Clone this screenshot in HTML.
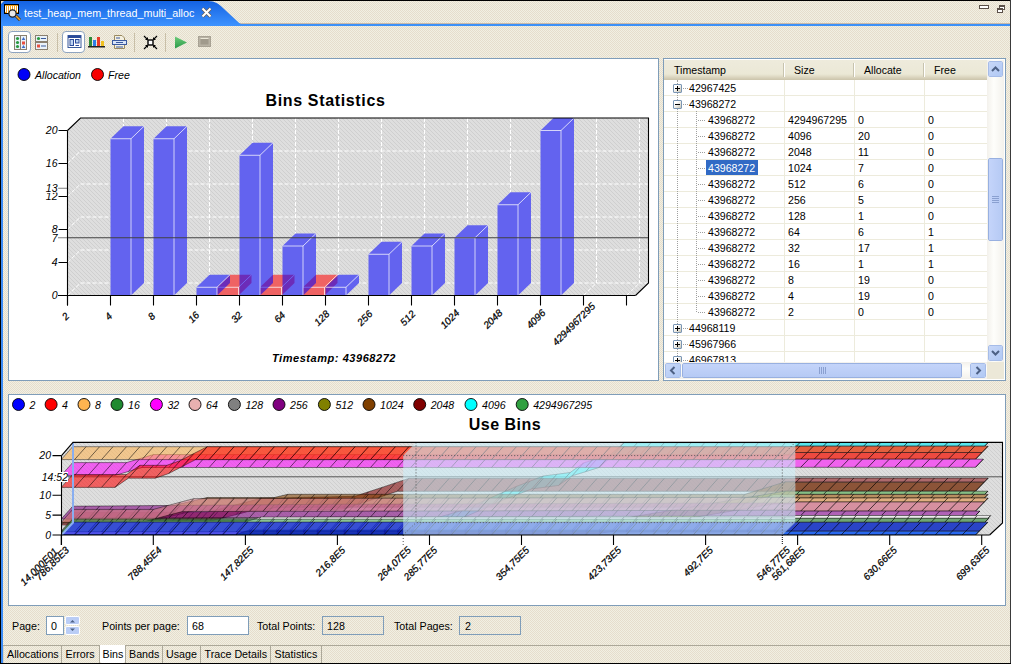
<!DOCTYPE html>
<html><head><meta charset="utf-8">
<style>
*{box-sizing:border-box}
html,body{margin:0;padding:0}
body{width:1011px;height:664px;overflow:hidden;position:relative;background:#ECE7D7 repeating-conic-gradient(#F1F0E3 0 25%,#E6DDCC 0 50%) 0 0/2px 2px;font-family:"Liberation Sans",sans-serif;font-size:10.7px;color:#000}
.a{position:absolute}
.t{position:absolute;white-space:nowrap;line-height:1}
.panel{position:absolute;background:#fff;border:1px solid #7F9DB9}
</style></head><body>
<!-- frame -->
<div class="a" style="left:0;top:0;width:1011px;height:1px;background:#000"></div>
<div class="a" style="left:0;top:0;width:1px;height:664px;background:#000"></div>
<div class="a" style="left:1010px;top:0;width:1px;height:664px;background:#3a3a3a"></div>
<div class="a" style="left:0;top:663px;width:1011px;height:1px;background:#000"></div>
<div class="a" style="left:1px;top:1px;width:2px;height:662px;background:#3C8CF5"></div>
<!-- tab bar -->
<div class="a" style="left:1px;top:23px;width:1009px;height:1px;background:#C8B8A8"></div>
<div class="a" style="left:1px;top:24px;width:1009px;height:2px;background:#3D91F8"></div>
<svg class="a" style="left:1px;top:1px" width="250" height="25">
<defs><linearGradient id="tg" x1="0" y1="0" x2="0" y2="1"><stop offset="0" stop-color="#1462E2"/><stop offset="1" stop-color="#3D93FF"/></linearGradient></defs>
<path d="M0 0 H207 C214 0 218 3 222 7 L236 20 C239 23 241 24 246 24 H250 V25 H0 Z" fill="url(#tg)"/>
<path d="M0 0 H3 L0 3 Z" fill="#E8E0D0"/>
</svg>
<div class="t" style="left:24px;top:8px;color:#fff;font-size:10.75px">test_heap_mem_thread_multi_alloc</div>
<!-- tab icon -->
<svg class="a" style="left:4px;top:4px" width="17" height="17" shape-rendering="crispEdges">
<rect x="0" y="0" width="15" height="10" fill="#000"/>
<rect x="1" y="1" width="13" height="8" fill="#F0A020"/>
<rect x="1" y="2" width="1" height="6" fill="#fff"/><rect x="3" y="2" width="1" height="7" fill="#fff"/>
<rect x="5" y="2" width="1" height="6" fill="#fff"/><rect x="7" y="2" width="1" height="7" fill="#fff"/>
<rect x="9" y="2" width="1" height="6" fill="#fff"/><rect x="11" y="2" width="1" height="7" fill="#fff"/>
<rect x="13" y="2" width="1" height="6" fill="#fff"/>
</svg>
<svg class="a" style="left:4px;top:4px" width="17" height="17">
<path d="M12 12L16 16" stroke="#4a3000" stroke-width="3"/>
<path d="M12 12L16 16" stroke="#F0A030" stroke-width="1.6"/>
<circle cx="8.5" cy="9.5" r="3.6" fill="#E8E8E8" stroke="#222" stroke-width="1.3"/>
</svg>
<!-- close X -->
<svg class="a" style="left:201px;top:7px" width="11" height="11">
<path d="M1.5 1.5L9.5 9.5M9.5 1.5L1.5 9.5" stroke="#6a5a4a" stroke-width="3.2"/>
<path d="M1.5 1.5L9.5 9.5M9.5 1.5L1.5 9.5" stroke="#fff" stroke-width="2"/>
</svg>
<!-- min / restore -->
<div class="a" style="left:979px;top:5px;width:10px;height:4px;border:1px solid #5a5048;background:#fff"></div>
<div class="a" style="left:999px;top:5px;width:6px;height:5px;border:1px solid #5a5048;border-top-width:2px;background:#fff"></div>
<div class="a" style="left:997px;top:8px;width:6px;height:5px;border:1px solid #5a5048;border-top-width:2px;background:#fff"></div>

<!-- toolbar -->
<div class="a" style="left:8px;top:31px;width:23px;height:22px;background:#fff;border:1px solid #8EA4C0;border-radius:4px"></div>
<div class="a" style="left:62px;top:31px;width:23px;height:22px;background:#fff;border:1px solid #8EA4C0;border-radius:4px"></div>
<div class="a" style="left:57px;top:33px;width:1px;height:19px;background:#C8BFA8"></div>
<div class="a" style="left:134px;top:33px;width:1px;height:19px;background:#C8BFA8"></div>
<div class="a" style="left:165px;top:33px;width:1px;height:19px;background:#C8BFA8"></div>
<svg class="a" style="left:13px;top:34px" width="15" height="17">
<rect x="1.5" y="1.5" width="12" height="14" fill="#EAF2FA" stroke="#8A8070"/>
<path d="M7.5 1.5V15.5" stroke="#8A8070"/>
<circle cx="4.5" cy="4.5" r="1.6" fill="#2A9A40"/><circle cx="4.5" cy="8.5" r="1.6" fill="#2A9A40"/><circle cx="4.5" cy="12.5" r="1.6" fill="#2A9A40"/>
<path d="M10.5 3L12.3 6H8.7Z" fill="#3A6AC8"/><rect x="9" y="7.5" width="3" height="3" fill="#E85040"/><path d="M10.5 11L12.3 14H8.7Z" fill="#3A6AC8"/>
</svg>
<svg class="a" style="left:34px;top:34px" width="15" height="17">
<rect x="1.5" y="1.5" width="12" height="6" fill="#EAF2FA" stroke="#8A8070"/>
<rect x="1.5" y="8.5" width="12" height="7" fill="#EAF2FA" stroke="#8A8070"/>
<circle cx="4.5" cy="4.5" r="1.6" fill="#2A9A40"/><rect x="3" y="10.5" width="3" height="3" fill="#E85040"/>
<path d="M7 4.5H12M7 12H12" stroke="#3A5A9A" stroke-width="1"/>
</svg>
<svg class="a" style="left:67px;top:35px" width="15" height="14">
<rect x="1" y="0.5" width="13" height="12" fill="#fff" stroke="#3A5A9A"/>
<rect x="1" y="0.5" width="13" height="2.5" fill="#2A4A9A"/>
<rect x="3" y="4.5" width="3.5" height="6" fill="#BFD4F0" stroke="#2A4A9A"/>
<rect x="8.5" y="4.5" width="3.5" height="3.5" fill="#BFD4F0" stroke="#2A4A9A"/>
<path d="M8.5 10.5H12" stroke="#2A4A9A"/>
</svg>
<svg class="a" style="left:88px;top:36px" width="17" height="12">
<rect x="1" y="1" width="3" height="9" fill="#2E8A3A"/>
<rect x="5" y="4" width="3" height="6" fill="#2E7EE8"/>
<rect x="9" y="1" width="3" height="9" fill="#E83A2A"/>
<rect x="13" y="5" width="3" height="5" fill="#F0C020"/>
<rect x="0" y="10" width="17" height="1.5" fill="#222"/>
</svg>
<svg class="a" style="left:112px;top:35px" width="15" height="15">
<path d="M2.5 0.5H10L12.5 3V13.5H2.5Z" fill="#F4F0E0" stroke="#9A8A60"/>
<rect x="0.5" y="5.5" width="14" height="4" fill="#D8E4F8" stroke="#3A5AA0"/>
<path d="M4 3H8M4 7.5H11M4 12H11" stroke="#3A5AA0"/>
</svg>
<svg class="a" style="left:143px;top:35px" width="15" height="15">
<rect x="5" y="5" width="5" height="5" fill="#fff" stroke="#000" stroke-width="1.4"/>
<path d="M1 1L4.5 4.5M14 1L10.5 4.5M1 14L4.5 10.5M14 14L10.5 10.5" stroke="#000" stroke-width="1.2"/>
<path d="M2.5 4.5H4.5V2.5M12.5 4.5H10.5V2.5M2.5 10.5H4.5V12.5M12.5 10.5H10.5V12.5" stroke="#000" fill="none" stroke-width="1"/>
</svg>
<svg class="a" style="left:174px;top:36px" width="14" height="13">
<defs><linearGradient id="pg" x1="0" y1="0" x2="0" y2="1"><stop offset="0" stop-color="#6CCB7A"/><stop offset="1" stop-color="#2A9A48"/></linearGradient></defs>
<path d="M1 0.5L13 6.5L1 12.5Z" fill="url(#pg)"/>
</svg>
<svg class="a" style="left:198px;top:36px" width="13" height="11">
<rect x="0.5" y="0.5" width="12" height="10" fill="#B8B2A4" stroke="#A8A294"/>
<rect x="2.5" y="2.5" width="8" height="6" fill="#A09A8C"/>
<path d="M2.5 2.5H10.5" stroke="#ECE8D8"/>
</svg>


<!-- panels -->
<div class="panel" style="left:8px;top:58px;width:651px;height:323px"></div>
<div class="panel" style="left:663px;top:58px;width:343px;height:323px"></div>
<div class="panel" style="left:8px;top:394px;width:998px;height:212px"></div>

<svg class="a" style="left:0;top:0" width="1011" height="664" viewBox="0 0 1011 664">
<defs><pattern id="hatch" width="4" height="4" patternUnits="userSpaceOnUse"><rect width="4" height="4" fill="#DEDEDE"/><path d="M0 0L4 4M3 -1L5 1M-1 3L1 5" stroke="#CFCFCF" stroke-width="1"/></pattern></defs>
<circle cx="24" cy="74.5" r="6" fill="#0000F8" stroke="#000" stroke-width="0.9"/>
<circle cx="97.5" cy="74.5" r="6" fill="#F80000" stroke="#000" stroke-width="0.9"/>
<text x="35" y="78.8" font-size="10.6" font-style="italic">Allocation</text>
<text x="108" y="78.8" font-size="10.6" font-style="italic">Free</text>
<text x="325.5" y="105.5" font-size="16" font-weight="bold" text-anchor="middle" letter-spacing="0.65">Bins Statistics</text>
<path d="M67.5 130.5 L80.5 118.0 H648.5 V283.0 L635.5 295.5 H67.5 Z" fill="url(#hatch)"/>
<path d="M80.5 151.0H648.5M67.5 163.5L80.5 151.0M80.5 184.0H648.5M67.5 196.5L80.5 184.0M80.5 217.0H648.5M67.5 229.5L80.5 217.0M80.5 250.0H648.5M67.5 262.5L80.5 250.0M80.5 283.0H648.5M123.5 118.0V283.0M110.5 295.5L123.5 283.0M166.5 118.0V283.0M153.5 295.5L166.5 283.0M209.5 118.0V283.0M196.5 295.5L209.5 283.0M252.5 118.0V283.0M239.5 295.5L252.5 283.0M295.5 118.0V283.0M282.5 295.5L295.5 283.0M338.5 118.0V283.0M325.5 295.5L338.5 283.0M381.5 118.0V283.0M368.5 295.5L381.5 283.0M424.5 118.0V283.0M411.5 295.5L424.5 283.0M467.5 118.0V283.0M454.5 295.5L467.5 283.0M510.5 118.0V283.0M497.5 295.5L510.5 283.0M553.5 118.0V283.0M540.5 295.5L553.5 283.0M596.5 118.0V283.0M583.5 295.5L596.5 283.0M639.5 118.0V283.0M626.5 295.5L639.5 283.0M67.5 295.5L80.5 283.0" stroke="#fff" stroke-width="1" stroke-dasharray="4 2" fill="none"/>

<path d="M110.5 295.5V138.75L123.5 126.25H144.0V283.0L131.0 295.5Z" fill="#DCDCDC"/>
<path d="M153.5 295.5V138.75L166.5 126.25H187.0V283.0L174.0 295.5Z" fill="#DCDCDC"/>
<path d="M217.0 295.5V287.25L230.0 274.75H251.5V283.0L238.5 295.5Z" fill="#DCDCDC"/>
<path d="M196.5 295.5V287.25L209.5 274.75H230.0V283.0L217.0 295.5Z" fill="#DCDCDC"/>
<path d="M260.0 295.5V287.25L273.0 274.75H294.5V283.0L281.5 295.5Z" fill="#DCDCDC"/>
<path d="M239.5 295.5V155.25L252.5 142.75H273.0V283.0L260.0 295.5Z" fill="#DCDCDC"/>
<path d="M303.0 295.5V287.25L316.0 274.75H337.5V283.0L324.5 295.5Z" fill="#DCDCDC"/>
<path d="M282.5 295.5V246.0L295.5 233.5H316.0V283.0L303.0 295.5Z" fill="#DCDCDC"/>
<path d="M325.5 295.5V287.25L338.5 274.75H359.0V283.0L346.0 295.5Z" fill="#DCDCDC"/>
<path d="M368.5 295.5V254.25L381.5 241.75H402.0V283.0L389.0 295.5Z" fill="#DCDCDC"/>
<path d="M411.5 295.5V246.0L424.5 233.5H445.0V283.0L432.0 295.5Z" fill="#DCDCDC"/>
<path d="M454.5 295.5V237.75L467.5 225.25H488.0V283.0L475.0 295.5Z" fill="#DCDCDC"/>
<path d="M497.5 295.5V204.75L510.5 192.25H531.0V283.0L518.0 295.5Z" fill="#DCDCDC"/>
<path d="M540.5 295.5V130.5L553.5 118.0H574.0V283.0L561.0 295.5Z" fill="#DCDCDC"/>

<path d="M238.5 287.25L251.5 274.75V283.0L238.5 295.5Z" fill="rgba(255,0,0,0.55)"/><path d="M217.0 287.25L230.0 274.75H251.5L238.5 287.25Z" fill="rgba(255,0,0,0.55)"/><path d="M217.0 295.5V287.25H238.5V295.5Z" fill="rgba(255,0,0,0.55)"/><path d="M217.0 287.25H238.5V295.5M238.5 287.25L251.5 274.75" stroke="#fff" stroke-opacity="0.7" stroke-width="1" fill="none"/>
<path d="M281.5 287.25L294.5 274.75V283.0L281.5 295.5Z" fill="rgba(255,0,0,0.55)"/><path d="M260.0 287.25L273.0 274.75H294.5L281.5 287.25Z" fill="rgba(255,0,0,0.55)"/><path d="M260.0 295.5V287.25H281.5V295.5Z" fill="rgba(255,0,0,0.55)"/><path d="M260.0 287.25H281.5V295.5M281.5 287.25L294.5 274.75" stroke="#fff" stroke-opacity="0.7" stroke-width="1" fill="none"/>
<path d="M324.5 287.25L337.5 274.75V283.0L324.5 295.5Z" fill="rgba(255,0,0,0.55)"/><path d="M303.0 287.25L316.0 274.75H337.5L324.5 287.25Z" fill="rgba(255,0,0,0.55)"/><path d="M303.0 295.5V287.25H324.5V295.5Z" fill="rgba(255,0,0,0.55)"/><path d="M303.0 287.25H324.5V295.5M324.5 287.25L337.5 274.75" stroke="#fff" stroke-opacity="0.7" stroke-width="1" fill="none"/>

<path d="M131.0 138.75L144.0 126.25V283.0L131.0 295.5Z" fill="rgba(0,0,255,0.55)"/><path d="M110.5 138.75L123.5 126.25H144.0L131.0 138.75Z" fill="rgba(0,0,255,0.55)"/><path d="M110.5 295.5V138.75H131.0V295.5Z" fill="rgba(0,0,255,0.55)"/><path d="M110.5 138.75H131.0V295.5M131.0 138.75L144.0 126.25" stroke="#fff" stroke-opacity="0.7" stroke-width="1" fill="none"/>
<path d="M174.0 138.75L187.0 126.25V283.0L174.0 295.5Z" fill="rgba(0,0,255,0.55)"/><path d="M153.5 138.75L166.5 126.25H187.0L174.0 138.75Z" fill="rgba(0,0,255,0.55)"/><path d="M153.5 295.5V138.75H174.0V295.5Z" fill="rgba(0,0,255,0.55)"/><path d="M153.5 138.75H174.0V295.5M174.0 138.75L187.0 126.25" stroke="#fff" stroke-opacity="0.7" stroke-width="1" fill="none"/>
<path d="M217.0 287.25L230.0 274.75V283.0L217.0 295.5Z" fill="rgba(0,0,255,0.55)"/><path d="M196.5 287.25L209.5 274.75H230.0L217.0 287.25Z" fill="rgba(0,0,255,0.55)"/><path d="M196.5 295.5V287.25H217.0V295.5Z" fill="rgba(0,0,255,0.55)"/><path d="M196.5 287.25H217.0V295.5M217.0 287.25L230.0 274.75" stroke="#fff" stroke-opacity="0.7" stroke-width="1" fill="none"/>
<path d="M260.0 155.25L273.0 142.75V283.0L260.0 295.5Z" fill="rgba(0,0,255,0.55)"/><path d="M239.5 155.25L252.5 142.75H273.0L260.0 155.25Z" fill="rgba(0,0,255,0.55)"/><path d="M239.5 295.5V155.25H260.0V295.5Z" fill="rgba(0,0,255,0.55)"/><path d="M239.5 155.25H260.0V295.5M260.0 155.25L273.0 142.75" stroke="#fff" stroke-opacity="0.7" stroke-width="1" fill="none"/>
<path d="M303.0 246.0L316.0 233.5V283.0L303.0 295.5Z" fill="rgba(0,0,255,0.55)"/><path d="M282.5 246.0L295.5 233.5H316.0L303.0 246.0Z" fill="rgba(0,0,255,0.55)"/><path d="M282.5 295.5V246.0H303.0V295.5Z" fill="rgba(0,0,255,0.55)"/><path d="M282.5 246.0H303.0V295.5M303.0 246.0L316.0 233.5" stroke="#fff" stroke-opacity="0.7" stroke-width="1" fill="none"/>
<path d="M346.0 287.25L359.0 274.75V283.0L346.0 295.5Z" fill="rgba(0,0,255,0.55)"/><path d="M325.5 287.25L338.5 274.75H359.0L346.0 287.25Z" fill="rgba(0,0,255,0.55)"/><path d="M325.5 295.5V287.25H346.0V295.5Z" fill="rgba(0,0,255,0.55)"/><path d="M325.5 287.25H346.0V295.5M346.0 287.25L359.0 274.75" stroke="#fff" stroke-opacity="0.7" stroke-width="1" fill="none"/>
<path d="M389.0 254.25L402.0 241.75V283.0L389.0 295.5Z" fill="rgba(0,0,255,0.55)"/><path d="M368.5 254.25L381.5 241.75H402.0L389.0 254.25Z" fill="rgba(0,0,255,0.55)"/><path d="M368.5 295.5V254.25H389.0V295.5Z" fill="rgba(0,0,255,0.55)"/><path d="M368.5 254.25H389.0V295.5M389.0 254.25L402.0 241.75" stroke="#fff" stroke-opacity="0.7" stroke-width="1" fill="none"/>
<path d="M432.0 246.0L445.0 233.5V283.0L432.0 295.5Z" fill="rgba(0,0,255,0.55)"/><path d="M411.5 246.0L424.5 233.5H445.0L432.0 246.0Z" fill="rgba(0,0,255,0.55)"/><path d="M411.5 295.5V246.0H432.0V295.5Z" fill="rgba(0,0,255,0.55)"/><path d="M411.5 246.0H432.0V295.5M432.0 246.0L445.0 233.5" stroke="#fff" stroke-opacity="0.7" stroke-width="1" fill="none"/>
<path d="M475.0 237.75L488.0 225.25V283.0L475.0 295.5Z" fill="rgba(0,0,255,0.55)"/><path d="M454.5 237.75L467.5 225.25H488.0L475.0 237.75Z" fill="rgba(0,0,255,0.55)"/><path d="M454.5 295.5V237.75H475.0V295.5Z" fill="rgba(0,0,255,0.55)"/><path d="M454.5 237.75H475.0V295.5M475.0 237.75L488.0 225.25" stroke="#fff" stroke-opacity="0.7" stroke-width="1" fill="none"/>
<path d="M518.0 204.75L531.0 192.25V283.0L518.0 295.5Z" fill="rgba(0,0,255,0.55)"/><path d="M497.5 204.75L510.5 192.25H531.0L518.0 204.75Z" fill="rgba(0,0,255,0.55)"/><path d="M497.5 295.5V204.75H518.0V295.5Z" fill="rgba(0,0,255,0.55)"/><path d="M497.5 204.75H518.0V295.5M518.0 204.75L531.0 192.25" stroke="#fff" stroke-opacity="0.7" stroke-width="1" fill="none"/>
<path d="M561.0 130.5L574.0 118.0V283.0L561.0 295.5Z" fill="rgba(0,0,255,0.55)"/><path d="M540.5 130.5L553.5 118.0H574.0L561.0 130.5Z" fill="rgba(0,0,255,0.55)"/><path d="M540.5 295.5V130.5H561.0V295.5Z" fill="rgba(0,0,255,0.55)"/><path d="M540.5 130.5H561.0V295.5M561.0 130.5L574.0 118.0" stroke="#fff" stroke-opacity="0.7" stroke-width="1" fill="none"/>

<path d="M67.5 237.75H648.5" stroke="#404040" stroke-width="1"/>
<path d="M67.5 130.5L80.5 118.0H648.5V283.0L635.5 295.5" stroke="#000" stroke-width="1.1" fill="none"/>
<path d="M67.5 130.5V305.5M58.0 295.5H635.5" stroke="#000" stroke-width="1.1" fill="none"/>
<path d="M58.5 130.5H67.5M58.5 163.5H67.5M58.5 196.5H67.5M58.5 229.5H67.5M58.5 262.5H67.5M67.5 295.5V305.5M110.5 295.5V305.5M153.5 295.5V305.5M196.5 295.5V305.5M239.5 295.5V305.5M282.5 295.5V305.5M325.5 295.5V305.5M368.5 295.5V305.5M411.5 295.5V305.5M454.5 295.5V305.5M497.5 295.5V305.5M540.5 295.5V305.5M583.5 295.5V305.5M626.5 295.5V305.5" stroke="#000" stroke-width="1.1" fill="none"/>
<path d="M58.5 188.25H67.5" stroke="#000" stroke-width="1" stroke-dasharray="1 1" fill="none"/>
<path d="M58.5 237.75H67.5" stroke="#000" stroke-width="1" stroke-dasharray="1 1" fill="none"/>
<text x="57.5" y="134.3" font-size="10.5" font-style="italic" text-anchor="end">20</text>
<text x="57.5" y="167.3" font-size="10.5" font-style="italic" text-anchor="end">16</text>
<text x="57.5" y="200.3" font-size="10.5" font-style="italic" text-anchor="end">12</text>
<text x="57.5" y="233.3" font-size="10.5" font-style="italic" text-anchor="end">8</text>
<text x="57.5" y="266.3" font-size="10.5" font-style="italic" text-anchor="end">4</text>
<text x="57.5" y="299.3" font-size="10.5" font-style="italic" text-anchor="end">0</text>
<text x="57.5" y="192.05" font-size="10.5" font-style="italic" text-anchor="end" stroke="#fff" stroke-width="2" paint-order="stroke">13</text>
<text x="57.5" y="241.55" font-size="10.5" font-style="italic" text-anchor="end" stroke="#fff" stroke-width="2" paint-order="stroke">7</text>
<text transform="translate(65.4 316.4) rotate(-45)" font-size="10" font-style="italic" text-anchor="middle" dy="3.5" stroke="#000" stroke-width="0.25">2</text>
<text transform="translate(108.4 316.4) rotate(-45)" font-size="10" font-style="italic" text-anchor="middle" dy="3.5" stroke="#000" stroke-width="0.25">4</text>
<text transform="translate(151.4 316.4) rotate(-45)" font-size="10" font-style="italic" text-anchor="middle" dy="3.5" stroke="#000" stroke-width="0.25">8</text>
<text transform="translate(193.6 317.2) rotate(-45)" font-size="10" font-style="italic" text-anchor="middle" dy="3.5" stroke="#000" stroke-width="0.25">16</text>
<text transform="translate(236.6 317.2) rotate(-45)" font-size="10" font-style="italic" text-anchor="middle" dy="3.5" stroke="#000" stroke-width="0.25">32</text>
<text transform="translate(279.6 317.2) rotate(-45)" font-size="10" font-style="italic" text-anchor="middle" dy="3.5" stroke="#000" stroke-width="0.25">64</text>
<text transform="translate(321.7 318.1) rotate(-45)" font-size="10" font-style="italic" text-anchor="middle" dy="3.5" stroke="#000" stroke-width="0.25">128</text>
<text transform="translate(364.7 318.1) rotate(-45)" font-size="10" font-style="italic" text-anchor="middle" dy="3.5" stroke="#000" stroke-width="0.25">256</text>
<text transform="translate(407.7 318.1) rotate(-45)" font-size="10" font-style="italic" text-anchor="middle" dy="3.5" stroke="#000" stroke-width="0.25">512</text>
<text transform="translate(449.8 319.0) rotate(-45)" font-size="10" font-style="italic" text-anchor="middle" dy="3.5" stroke="#000" stroke-width="0.25">1024</text>
<text transform="translate(492.8 319.0) rotate(-45)" font-size="10" font-style="italic" text-anchor="middle" dy="3.5" stroke="#000" stroke-width="0.25">2048</text>
<text transform="translate(535.8 319.0) rotate(-45)" font-size="10" font-style="italic" text-anchor="middle" dy="3.5" stroke="#000" stroke-width="0.25">4096</text>
<text transform="translate(573.7 324.1) rotate(-45)" font-size="10" font-style="italic" text-anchor="middle" dy="3.5" stroke="#000" stroke-width="0.25">4294967295</text>
<text x="272" y="362" font-size="11" font-weight="bold" font-style="italic" letter-spacing="0.55">Timestamp: 43968272</text>
</svg>
<div class="a" style="left:664px;top:59px;width:341px;height:1px;background:#fff"></div>
<div class="a" style="left:664px;top:60px;width:323px;height:20px;background:linear-gradient(#EEEBDC 0,#EBE8D6 14px,#E2DDC8 16px,#D6D0B9 18px,#CBC4AB 20px)"></div>
<div class="a" style="left:783px;top:63px;width:1px;height:14px;background:#C7C3AE"></div>
<div class="a" style="left:784px;top:63px;width:1px;height:14px;background:#fff"></div>
<div class="a" style="left:853px;top:63px;width:1px;height:14px;background:#C7C3AE"></div>
<div class="a" style="left:854px;top:63px;width:1px;height:14px;background:#fff"></div>
<div class="a" style="left:923px;top:63px;width:1px;height:14px;background:#C7C3AE"></div>
<div class="a" style="left:924px;top:63px;width:1px;height:14px;background:#fff"></div>
<div class="t" style="left:674px;top:64.5px;font-size:10.6px">Timestamp</div>
<div class="t" style="left:794px;top:64.5px;font-size:10.6px">Size</div>
<div class="t" style="left:864px;top:64.5px;font-size:10.6px">Allocate</div>
<div class="t" style="left:934px;top:64.5px;font-size:10.6px">Free</div>
<div class="a" style="left:664px;top:80px;width:323px;height:282px;overflow:hidden">
<div class="a" style="left:0;top:15px;width:323px;height:1px;background:#EDEBDC"></div>
<div class="a" style="left:0;top:31px;width:323px;height:1px;background:#EDEBDC"></div>
<div class="a" style="left:0;top:47px;width:323px;height:1px;background:#EDEBDC"></div>
<div class="a" style="left:0;top:63px;width:323px;height:1px;background:#EDEBDC"></div>
<div class="a" style="left:0;top:79px;width:323px;height:1px;background:#EDEBDC"></div>
<div class="a" style="left:0;top:95px;width:323px;height:1px;background:#EDEBDC"></div>
<div class="a" style="left:0;top:111px;width:323px;height:1px;background:#EDEBDC"></div>
<div class="a" style="left:0;top:127px;width:323px;height:1px;background:#EDEBDC"></div>
<div class="a" style="left:0;top:143px;width:323px;height:1px;background:#EDEBDC"></div>
<div class="a" style="left:0;top:159px;width:323px;height:1px;background:#EDEBDC"></div>
<div class="a" style="left:0;top:175px;width:323px;height:1px;background:#EDEBDC"></div>
<div class="a" style="left:0;top:191px;width:323px;height:1px;background:#EDEBDC"></div>
<div class="a" style="left:0;top:207px;width:323px;height:1px;background:#EDEBDC"></div>
<div class="a" style="left:0;top:223px;width:323px;height:1px;background:#EDEBDC"></div>
<div class="a" style="left:0;top:239px;width:323px;height:1px;background:#EDEBDC"></div>
<div class="a" style="left:0;top:255px;width:323px;height:1px;background:#EDEBDC"></div>
<div class="a" style="left:0;top:271px;width:323px;height:1px;background:#EDEBDC"></div>
<div class="a" style="left:0;top:287px;width:323px;height:1px;background:#EDEBDC"></div>
<div class="a" style="left:120px;top:0;width:1px;height:282px;background:#EDEBDC"></div>
<div class="a" style="left:190px;top:0;width:1px;height:282px;background:#EDEBDC"></div>
<div class="a" style="left:260px;top:0;width:1px;height:282px;background:#EDEBDC"></div>
<div class="a" style="left:13px;top:0;width:0;height:282px;border-left:1px dotted #A0A0A0"></div>
<div class="a" style="left:32px;top:31px;width:0;height:201px;border-left:1px dotted #A0A0A0"></div>
<div class="a" style="left:9px;top:4px;width:9px;height:9px;border:1px solid #7A96B4;border-radius:1px;background:linear-gradient(135deg,#fff 30%,#C8C4B4)"></div>
<div class="a" style="left:11px;top:8px;width:5px;height:1px;background:#000"></div>
<div class="a" style="left:13px;top:6px;width:1px;height:5px;background:#000"></div>
<div class="a" style="left:19px;top:8px;width:5px;height:0;border-top:1px dotted #A0A0A0"></div>
<div class="t" style="left:25px;top:3.2px;font-size:10.6px">42967425</div>
<div class="a" style="left:9px;top:20px;width:9px;height:9px;border:1px solid #7A96B4;border-radius:1px;background:linear-gradient(135deg,#fff 30%,#C8C4B4)"></div>
<div class="a" style="left:11px;top:24px;width:5px;height:1px;background:#000"></div>
<div class="a" style="left:19px;top:24px;width:5px;height:0;border-top:1px dotted #A0A0A0"></div>
<div class="t" style="left:25px;top:19.2px;font-size:10.6px">43968272</div>
<div class="a" style="left:34px;top:40px;width:7px;height:0;border-top:1px dotted #A0A0A0"></div>
<div class="t" style="left:44px;top:35.2px;font-size:10.6px">43968272</div>
<div class="t" style="left:124px;top:35.2px;font-size:10.6px">4294967295</div>
<div class="t" style="left:194px;top:35.2px;font-size:10.6px">0</div>
<div class="t" style="left:264px;top:35.2px;font-size:10.6px">0</div>
<div class="a" style="left:34px;top:56px;width:7px;height:0;border-top:1px dotted #A0A0A0"></div>
<div class="t" style="left:44px;top:51.2px;font-size:10.6px">43968272</div>
<div class="t" style="left:124px;top:51.2px;font-size:10.6px">4096</div>
<div class="t" style="left:194px;top:51.2px;font-size:10.6px">20</div>
<div class="t" style="left:264px;top:51.2px;font-size:10.6px">0</div>
<div class="a" style="left:34px;top:72px;width:7px;height:0;border-top:1px dotted #A0A0A0"></div>
<div class="t" style="left:44px;top:67.2px;font-size:10.6px">43968272</div>
<div class="t" style="left:124px;top:67.2px;font-size:10.6px">2048</div>
<div class="t" style="left:194px;top:67.2px;font-size:10.6px">11</div>
<div class="t" style="left:264px;top:67.2px;font-size:10.6px">0</div>
<div class="a" style="left:34px;top:88px;width:7px;height:0;border-top:1px dotted #A0A0A0"></div>
<div class="a" style="left:42px;top:80px;width:52px;height:15px;background:#316AC5"></div>
<div class="t" style="left:44px;top:83.2px;font-size:10.6px;color:#fff">43968272</div>
<div class="t" style="left:124px;top:83.2px;font-size:10.6px">1024</div>
<div class="t" style="left:194px;top:83.2px;font-size:10.6px">7</div>
<div class="t" style="left:264px;top:83.2px;font-size:10.6px">0</div>
<div class="a" style="left:34px;top:104px;width:7px;height:0;border-top:1px dotted #A0A0A0"></div>
<div class="t" style="left:44px;top:99.2px;font-size:10.6px">43968272</div>
<div class="t" style="left:124px;top:99.2px;font-size:10.6px">512</div>
<div class="t" style="left:194px;top:99.2px;font-size:10.6px">6</div>
<div class="t" style="left:264px;top:99.2px;font-size:10.6px">0</div>
<div class="a" style="left:34px;top:120px;width:7px;height:0;border-top:1px dotted #A0A0A0"></div>
<div class="t" style="left:44px;top:115.2px;font-size:10.6px">43968272</div>
<div class="t" style="left:124px;top:115.2px;font-size:10.6px">256</div>
<div class="t" style="left:194px;top:115.2px;font-size:10.6px">5</div>
<div class="t" style="left:264px;top:115.2px;font-size:10.6px">0</div>
<div class="a" style="left:34px;top:136px;width:7px;height:0;border-top:1px dotted #A0A0A0"></div>
<div class="t" style="left:44px;top:131.2px;font-size:10.6px">43968272</div>
<div class="t" style="left:124px;top:131.2px;font-size:10.6px">128</div>
<div class="t" style="left:194px;top:131.2px;font-size:10.6px">1</div>
<div class="t" style="left:264px;top:131.2px;font-size:10.6px">0</div>
<div class="a" style="left:34px;top:152px;width:7px;height:0;border-top:1px dotted #A0A0A0"></div>
<div class="t" style="left:44px;top:147.2px;font-size:10.6px">43968272</div>
<div class="t" style="left:124px;top:147.2px;font-size:10.6px">64</div>
<div class="t" style="left:194px;top:147.2px;font-size:10.6px">6</div>
<div class="t" style="left:264px;top:147.2px;font-size:10.6px">1</div>
<div class="a" style="left:34px;top:168px;width:7px;height:0;border-top:1px dotted #A0A0A0"></div>
<div class="t" style="left:44px;top:163.2px;font-size:10.6px">43968272</div>
<div class="t" style="left:124px;top:163.2px;font-size:10.6px">32</div>
<div class="t" style="left:194px;top:163.2px;font-size:10.6px">17</div>
<div class="t" style="left:264px;top:163.2px;font-size:10.6px">1</div>
<div class="a" style="left:34px;top:184px;width:7px;height:0;border-top:1px dotted #A0A0A0"></div>
<div class="t" style="left:44px;top:179.2px;font-size:10.6px">43968272</div>
<div class="t" style="left:124px;top:179.2px;font-size:10.6px">16</div>
<div class="t" style="left:194px;top:179.2px;font-size:10.6px">1</div>
<div class="t" style="left:264px;top:179.2px;font-size:10.6px">1</div>
<div class="a" style="left:34px;top:200px;width:7px;height:0;border-top:1px dotted #A0A0A0"></div>
<div class="t" style="left:44px;top:195.2px;font-size:10.6px">43968272</div>
<div class="t" style="left:124px;top:195.2px;font-size:10.6px">8</div>
<div class="t" style="left:194px;top:195.2px;font-size:10.6px">19</div>
<div class="t" style="left:264px;top:195.2px;font-size:10.6px">0</div>
<div class="a" style="left:34px;top:216px;width:7px;height:0;border-top:1px dotted #A0A0A0"></div>
<div class="t" style="left:44px;top:211.2px;font-size:10.6px">43968272</div>
<div class="t" style="left:124px;top:211.2px;font-size:10.6px">4</div>
<div class="t" style="left:194px;top:211.2px;font-size:10.6px">19</div>
<div class="t" style="left:264px;top:211.2px;font-size:10.6px">0</div>
<div class="a" style="left:34px;top:232px;width:7px;height:0;border-top:1px dotted #A0A0A0"></div>
<div class="t" style="left:44px;top:227.2px;font-size:10.6px">43968272</div>
<div class="t" style="left:124px;top:227.2px;font-size:10.6px">2</div>
<div class="t" style="left:194px;top:227.2px;font-size:10.6px">0</div>
<div class="t" style="left:264px;top:227.2px;font-size:10.6px">0</div>
<div class="a" style="left:9px;top:244px;width:9px;height:9px;border:1px solid #7A96B4;border-radius:1px;background:linear-gradient(135deg,#fff 30%,#C8C4B4)"></div>
<div class="a" style="left:11px;top:248px;width:5px;height:1px;background:#000"></div>
<div class="a" style="left:13px;top:246px;width:1px;height:5px;background:#000"></div>
<div class="a" style="left:19px;top:248px;width:5px;height:0;border-top:1px dotted #A0A0A0"></div>
<div class="t" style="left:25px;top:243.2px;font-size:10.6px">44968119</div>
<div class="a" style="left:9px;top:260px;width:9px;height:9px;border:1px solid #7A96B4;border-radius:1px;background:linear-gradient(135deg,#fff 30%,#C8C4B4)"></div>
<div class="a" style="left:11px;top:264px;width:5px;height:1px;background:#000"></div>
<div class="a" style="left:13px;top:262px;width:1px;height:5px;background:#000"></div>
<div class="a" style="left:19px;top:264px;width:5px;height:0;border-top:1px dotted #A0A0A0"></div>
<div class="t" style="left:25px;top:259.2px;font-size:10.6px">45967966</div>
<div class="a" style="left:9px;top:276px;width:9px;height:9px;border:1px solid #7A96B4;border-radius:1px;background:linear-gradient(135deg,#fff 30%,#C8C4B4)"></div>
<div class="a" style="left:11px;top:280px;width:5px;height:1px;background:#000"></div>
<div class="a" style="left:13px;top:278px;width:1px;height:5px;background:#000"></div>
<div class="a" style="left:19px;top:280px;width:5px;height:0;border-top:1px dotted #A0A0A0"></div>
<div class="t" style="left:25px;top:275.2px;font-size:10.6px">46967813</div>
</div>
<div class="a" style="left:987px;top:60px;width:17px;height:302px;background:linear-gradient(90deg,#F3F1EC,#FEFEFB 40%,#F3F1EC)"></div>
<div class="a" style="left:988px;top:61px;width:15px;height:16px;border:1px solid #fff;border-radius:2px;background:linear-gradient(135deg,#C8D8F8,#B0C8F4)"></div>
<div class="a" style="left:988px;top:61px;width:15px;height:16px;border:1px solid #A6BCE8;border-radius:2px"></div>
<svg class="a" style="left:988px;top:61px" width="15" height="16"><path d="M4 10L7.5 6.5L11 10" stroke="#4D6185" stroke-width="2" fill="none"/></svg>
<div class="a" style="left:988px;top:345px;width:15px;height:16px;border:1px solid #fff;border-radius:2px;background:linear-gradient(135deg,#C8D8F8,#B0C8F4)"></div>
<div class="a" style="left:988px;top:345px;width:15px;height:16px;border:1px solid #A6BCE8;border-radius:2px"></div>
<svg class="a" style="left:988px;top:345px" width="15" height="16"><path d="M4 6L7.5 9.5L11 6" stroke="#4D6185" stroke-width="2" fill="none"/></svg>
<div class="a" style="left:988px;top:158px;width:15px;height:83px;border:1px solid #fff;border-radius:2px;background:linear-gradient(90deg,#C4D4FA,#B6CAF4)"></div>
<div class="a" style="left:988px;top:158px;width:15px;height:83px;border:1px solid #98B0E0;border-radius:2px"></div>
<svg class="a" style="left:991px;top:195px" width="9" height="8"><path d="M1 1.5H8M1 3.5H8M1 5.5H8M1 7.5H8" stroke="#8AA0D0" stroke-width="1"/></svg>
<div class="a" style="left:664px;top:362px;width:323px;height:17px;background:linear-gradient(#F3F1EC,#FEFEFB 40%,#F3F1EC)"></div>
<div class="a" style="left:665px;top:363px;width:16px;height:15px;border:1px solid #fff;border-radius:2px;background:linear-gradient(135deg,#C8D8F8,#B0C8F4)"></div>
<div class="a" style="left:665px;top:363px;width:16px;height:15px;border:1px solid #A6BCE8;border-radius:2px"></div>
<svg class="a" style="left:665px;top:363px" width="16" height="15"><path d="M9.5 4L6 7.5L9.5 11" stroke="#4D6185" stroke-width="2" fill="none"/></svg>
<div class="a" style="left:970px;top:363px;width:16px;height:15px;border:1px solid #fff;border-radius:2px;background:linear-gradient(135deg,#C8D8F8,#B0C8F4)"></div>
<div class="a" style="left:970px;top:363px;width:16px;height:15px;border:1px solid #A6BCE8;border-radius:2px"></div>
<svg class="a" style="left:970px;top:363px" width="16" height="15"><path d="M6.5 4L10 7.5L6.5 11" stroke="#4D6185" stroke-width="2" fill="none"/></svg>
<div class="a" style="left:682px;top:363px;width:280px;height:15px;border:1px solid #fff;border-radius:2px;background:linear-gradient(#C4D4FA,#B6CAF4)"></div>
<div class="a" style="left:682px;top:363px;width:280px;height:15px;border:1px solid #98B0E0;border-radius:2px"></div>
<svg class="a" style="left:818px;top:366px" width="8" height="9"><path d="M1.5 1V8M3.5 1V8M5.5 1V8M7.5 1V8" stroke="#8AA0D0" stroke-width="1"/></svg>
<div class="a" style="left:987px;top:362px;width:17px;height:17px;background:#ECE8D8"></div>
<svg class="a" style="left:0;top:0" width="1011" height="664" viewBox="0 0 1011 664">
<defs><pattern id="hatch2" width="4" height="4" patternUnits="userSpaceOnUse"><rect width="4" height="4" fill="#DEDEDE"/><path d="M0 0L4 4M3 -1L5 1M-1 3L1 5" stroke="#CFCFCF" stroke-width="1"/></pattern><clipPath id="plot2"><path d="M61.5 455.6 L73 442.4 H795.2 V522.6 L782.3 535 H61.5 Z"/></clipPath><clipPath id="rreg"><path d="M795.2 442.4 H1002.5 V523 L989.6 535 H782.3 L795.2 522.6 Z"/></clipPath></defs>
<circle cx="18.5" cy="404.5" r="6" fill="#0000FF" stroke="#000" stroke-width="0.9"/>
<text x="29.5" y="408.6" font-size="10.6" font-style="italic">2</text>
<circle cx="51.1" cy="404.5" r="6" fill="#FF0000" stroke="#000" stroke-width="0.9"/>
<text x="62.1" y="408.6" font-size="10.6" font-style="italic">4</text>
<circle cx="84" cy="404.5" r="6" fill="#FFB450" stroke="#000" stroke-width="0.9"/>
<text x="95" y="408.6" font-size="10.6" font-style="italic">8</text>
<circle cx="117" cy="404.5" r="6" fill="#208A30" stroke="#000" stroke-width="0.9"/>
<text x="128" y="408.6" font-size="10.6" font-style="italic">16</text>
<circle cx="156.4" cy="404.5" r="6" fill="#FF00FF" stroke="#000" stroke-width="0.9"/>
<text x="167.4" y="408.6" font-size="10.6" font-style="italic">32</text>
<circle cx="195" cy="404.5" r="6" fill="#E8B0B0" stroke="#000" stroke-width="0.9"/>
<text x="206" y="408.6" font-size="10.6" font-style="italic">64</text>
<circle cx="234.4" cy="404.5" r="6" fill="#808080" stroke="#000" stroke-width="0.9"/>
<text x="245.4" y="408.6" font-size="10.6" font-style="italic">128</text>
<circle cx="279" cy="404.5" r="6" fill="#800080" stroke="#000" stroke-width="0.9"/>
<text x="290" y="408.6" font-size="10.6" font-style="italic">256</text>
<circle cx="324.4" cy="404.5" r="6" fill="#808000" stroke="#000" stroke-width="0.9"/>
<text x="335.4" y="408.6" font-size="10.6" font-style="italic">512</text>
<circle cx="369" cy="404.5" r="6" fill="#804000" stroke="#000" stroke-width="0.9"/>
<text x="380" y="408.6" font-size="10.6" font-style="italic">1024</text>
<circle cx="419.7" cy="404.5" r="6" fill="#800000" stroke="#000" stroke-width="0.9"/>
<text x="430.7" y="408.6" font-size="10.6" font-style="italic">2048</text>
<circle cx="471" cy="404.5" r="6" fill="#00FFFF" stroke="#000" stroke-width="0.9"/>
<text x="482" y="408.6" font-size="10.6" font-style="italic">4096</text>
<circle cx="522.2" cy="404.5" r="6" fill="#30A040" stroke="#000" stroke-width="0.9"/>
<text x="533.2" y="408.6" font-size="10.6" font-style="italic">4294967295</text>
<text x="505" y="429.6" font-size="16" font-weight="bold" text-anchor="middle" letter-spacing="0.5">Use Bins</text>
<path d="M61.5 455.6 L73 442.4 H1002.5 V523 L989.6 535 H61.5 Z" fill="url(#hatch2)"/>
<path d="M61.5 476.8 H1002.5" stroke="#555" stroke-width="1"/>
<g clip-path="url(#plot2)">
<polygon points="61.2,535.0 74.6,535.0 88.1,535.0 101.5,535.0 115.0,535.0 128.4,535.0 141.9,535.0 155.3,535.0 168.8,535.0 182.2,535.0 195.7,535.0 209.1,535.0 222.6,535.0 236.0,535.0 249.4,535.0 262.9,535.0 276.3,535.0 289.8,535.0 303.2,535.0 316.7,535.0 330.1,535.0 343.6,535.0 357.0,535.0 370.5,535.0 383.9,535.0 397.3,535.0 410.8,535.0 424.2,535.0 437.7,535.0 451.1,535.0 464.6,535.0 478.0,535.0 491.5,535.0 504.9,535.0 518.4,535.0 531.8,535.0 545.3,535.0 558.7,535.0 572.1,535.0 585.6,535.0 599.0,535.0 612.5,535.0 625.9,535.0 639.4,535.0 652.8,535.0 666.3,535.0 679.7,535.0 693.2,535.0 706.6,535.0 720.1,535.0 733.5,535.0 746.9,535.0 760.4,535.0 773.8,535.0 787.3,535.0 800.7,535.0 814.2,535.0 827.6,535.0 841.1,535.0 854.5,535.0 868.0,535.0 881.4,535.0 894.9,535.0 908.3,535.0 921.7,535.0 935.2,535.0 948.6,535.0 962.1,535.0 975.5,535.0 987.0,522.1 973.6,522.1 960.1,522.1 946.7,522.1 933.2,522.1 919.8,522.1 906.4,522.1 892.9,522.1 879.5,522.1 866.0,522.1 852.6,522.1 839.1,522.1 825.7,522.1 812.2,522.1 798.8,522.1 785.3,522.1 771.9,522.1 758.4,522.1 745.0,522.1 731.6,522.1 718.1,522.1 704.7,522.1 691.2,522.1 677.8,522.1 664.3,522.1 650.9,522.1 637.4,522.1 624.0,522.1 610.5,522.1 597.1,522.1 583.6,522.1 570.2,522.1 556.8,522.1 543.3,522.1 529.9,522.1 516.4,522.1 503.0,522.1 489.5,522.1 476.1,522.1 462.6,522.1 449.2,522.1 435.7,522.1 422.3,522.1 408.8,522.1 395.4,522.1 382.0,522.1 368.5,522.1 355.1,522.1 341.6,522.1 328.2,522.1 314.7,522.1 301.3,522.1 287.8,522.1 274.4,522.1 260.9,522.1 247.5,522.1 234.1,522.1 220.6,522.1 207.2,522.1 193.7,522.1 180.3,522.1 166.8,522.1 153.4,522.1 139.9,522.1 126.5,522.1 113.0,522.1 99.6,522.1 86.1,522.1 72.7,522.1" fill="rgba(48,160,64,0.56)" stroke="rgba(0,0,0,0.55)" stroke-width="0.8"/>
<path d="M74.6 535.0l11.5 -12.9M88.1 535.0l11.5 -12.9M101.5 535.0l11.5 -12.9M115.0 535.0l11.5 -12.9M128.4 535.0l11.5 -12.9M141.9 535.0l11.5 -12.9M155.3 535.0l11.5 -12.9M168.8 535.0l11.5 -12.9M182.2 535.0l11.5 -12.9M195.7 535.0l11.5 -12.9M209.1 535.0l11.5 -12.9M222.6 535.0l11.5 -12.9M236.0 535.0l11.5 -12.9M249.4 535.0l11.5 -12.9M262.9 535.0l11.5 -12.9M276.3 535.0l11.5 -12.9M289.8 535.0l11.5 -12.9M303.2 535.0l11.5 -12.9M316.7 535.0l11.5 -12.9M330.1 535.0l11.5 -12.9M343.6 535.0l11.5 -12.9M357.0 535.0l11.5 -12.9M370.5 535.0l11.5 -12.9M383.9 535.0l11.5 -12.9M397.3 535.0l11.5 -12.9M410.8 535.0l11.5 -12.9M424.2 535.0l11.5 -12.9M437.7 535.0l11.5 -12.9M451.1 535.0l11.5 -12.9M464.6 535.0l11.5 -12.9M478.0 535.0l11.5 -12.9M491.5 535.0l11.5 -12.9M504.9 535.0l11.5 -12.9M518.4 535.0l11.5 -12.9M531.8 535.0l11.5 -12.9M545.3 535.0l11.5 -12.9M558.7 535.0l11.5 -12.9M572.1 535.0l11.5 -12.9M585.6 535.0l11.5 -12.9M599.0 535.0l11.5 -12.9M612.5 535.0l11.5 -12.9M625.9 535.0l11.5 -12.9M639.4 535.0l11.5 -12.9M652.8 535.0l11.5 -12.9M666.3 535.0l11.5 -12.9M679.7 535.0l11.5 -12.9M693.2 535.0l11.5 -12.9M706.6 535.0l11.5 -12.9M720.1 535.0l11.5 -12.9M733.5 535.0l11.5 -12.9M746.9 535.0l11.5 -12.9M760.4 535.0l11.5 -12.9M773.8 535.0l11.5 -12.9M787.3 535.0l11.5 -12.9M800.7 535.0l11.5 -12.9M814.2 535.0l11.5 -12.9M827.6 535.0l11.5 -12.9M841.1 535.0l11.5 -12.9M854.5 535.0l11.5 -12.9M868.0 535.0l11.5 -12.9M881.4 535.0l11.5 -12.9M894.9 535.0l11.5 -12.9M908.3 535.0l11.5 -12.9M921.7 535.0l11.5 -12.9M935.2 535.0l11.5 -12.9M948.6 535.0l11.5 -12.9M962.1 535.0l11.5 -12.9" stroke="rgba(0,0,0,0.6)" stroke-width="0.9" fill="none"/>
<polygon points="61.2,535.0 74.6,535.0 88.1,535.0 101.5,535.0 115.0,535.0 128.4,535.0 141.9,535.0 155.3,535.0 168.8,535.0 182.2,535.0 195.7,535.0 209.1,535.0 222.6,535.0 236.0,535.0 249.4,535.0 262.9,535.0 276.3,535.0 289.8,535.0 303.2,535.0 316.7,535.0 330.1,535.0 343.6,535.0 357.0,535.0 370.5,535.0 383.9,535.0 397.3,535.0 410.8,535.0 424.2,531.0 437.7,527.1 451.1,523.1 464.6,517.1 478.0,511.2 491.5,505.2 504.9,499.3 518.4,494.1 531.8,488.9 545.3,487.2 558.7,485.4 572.1,475.8 585.6,471.7 599.0,467.5 612.5,455.6 625.9,455.6 639.4,455.6 652.8,455.6 666.3,455.6 679.7,455.6 693.2,455.6 706.6,455.6 720.1,455.6 733.5,455.6 746.9,455.6 760.4,455.6 773.8,455.6 787.3,455.6 800.7,455.6 814.2,455.6 827.6,455.6 841.1,455.6 854.5,455.6 868.0,455.6 881.4,455.6 894.9,455.6 908.3,455.6 921.7,455.6 935.2,455.6 948.6,455.6 962.1,455.6 975.5,455.6 987.0,442.7 973.6,442.7 960.1,442.7 946.7,442.7 933.2,442.7 919.8,442.7 906.4,442.7 892.9,442.7 879.5,442.7 866.0,442.7 852.6,442.7 839.1,442.7 825.7,442.7 812.2,442.7 798.8,442.7 785.3,442.7 771.9,442.7 758.4,442.7 745.0,442.7 731.6,442.7 718.1,442.7 704.7,442.7 691.2,442.7 677.8,442.7 664.3,442.7 650.9,442.7 637.4,442.7 624.0,442.7 610.5,454.6 597.1,458.8 583.6,462.9 570.2,472.5 556.8,474.3 543.3,476.0 529.9,481.2 516.4,486.4 503.0,492.3 489.5,498.3 476.1,504.2 462.6,510.2 449.2,514.2 435.7,518.1 422.3,522.1 408.8,522.1 395.4,522.1 382.0,522.1 368.5,522.1 355.1,522.1 341.6,522.1 328.2,522.1 314.7,522.1 301.3,522.1 287.8,522.1 274.4,522.1 260.9,522.1 247.5,522.1 234.1,522.1 220.6,522.1 207.2,522.1 193.7,522.1 180.3,522.1 166.8,522.1 153.4,522.1 139.9,522.1 126.5,522.1 113.0,522.1 99.6,522.1 86.1,522.1 72.7,522.1" fill="rgba(0,255,255,0.56)" stroke="rgba(0,0,0,0.55)" stroke-width="0.8"/>
<path d="M74.6 535.0l11.5 -12.9M88.1 535.0l11.5 -12.9M101.5 535.0l11.5 -12.9M115.0 535.0l11.5 -12.9M128.4 535.0l11.5 -12.9M141.9 535.0l11.5 -12.9M155.3 535.0l11.5 -12.9M168.8 535.0l11.5 -12.9M182.2 535.0l11.5 -12.9M195.7 535.0l11.5 -12.9M209.1 535.0l11.5 -12.9M222.6 535.0l11.5 -12.9M236.0 535.0l11.5 -12.9M249.4 535.0l11.5 -12.9M262.9 535.0l11.5 -12.9M276.3 535.0l11.5 -12.9M289.8 535.0l11.5 -12.9M303.2 535.0l11.5 -12.9M316.7 535.0l11.5 -12.9M330.1 535.0l11.5 -12.9M343.6 535.0l11.5 -12.9M357.0 535.0l11.5 -12.9M370.5 535.0l11.5 -12.9M383.9 535.0l11.5 -12.9M397.3 535.0l11.5 -12.9M410.8 535.0l11.5 -12.9M424.2 531.0l11.5 -12.9M437.7 527.1l11.5 -12.9M451.1 523.1l11.5 -12.9M464.6 517.1l11.5 -12.9M478.0 511.2l11.5 -12.9M491.5 505.2l11.5 -12.9M504.9 499.3l11.5 -12.9M518.4 494.1l11.5 -12.9M531.8 488.9l11.5 -12.9M545.3 487.2l11.5 -12.9M558.7 485.4l11.5 -12.9M572.1 475.8l11.5 -12.9M585.6 471.7l11.5 -12.9M599.0 467.5l11.5 -12.9M612.5 455.6l11.5 -12.9M625.9 455.6l11.5 -12.9M639.4 455.6l11.5 -12.9M652.8 455.6l11.5 -12.9M666.3 455.6l11.5 -12.9M679.7 455.6l11.5 -12.9M693.2 455.6l11.5 -12.9M706.6 455.6l11.5 -12.9M720.1 455.6l11.5 -12.9M733.5 455.6l11.5 -12.9M746.9 455.6l11.5 -12.9M760.4 455.6l11.5 -12.9M773.8 455.6l11.5 -12.9M787.3 455.6l11.5 -12.9M800.7 455.6l11.5 -12.9M814.2 455.6l11.5 -12.9M827.6 455.6l11.5 -12.9M841.1 455.6l11.5 -12.9M854.5 455.6l11.5 -12.9M868.0 455.6l11.5 -12.9M881.4 455.6l11.5 -12.9M894.9 455.6l11.5 -12.9M908.3 455.6l11.5 -12.9M921.7 455.6l11.5 -12.9M935.2 455.6l11.5 -12.9M948.6 455.6l11.5 -12.9M962.1 455.6l11.5 -12.9" stroke="rgba(0,0,0,0.6)" stroke-width="0.9" fill="none"/>
<polygon points="61.2,525.1 74.6,525.1 88.1,525.1 101.5,525.1 115.0,525.1 128.4,525.1 141.9,525.1 155.3,525.1 168.8,525.1 182.2,525.1 195.7,525.1 209.1,521.6 222.6,518.1 236.0,514.7 249.4,511.2 262.9,510.9 276.3,510.6 289.8,510.3 303.2,510.0 316.7,509.8 330.1,509.5 343.6,509.2 357.0,504.7 370.5,500.3 383.9,495.8 397.3,491.3 410.8,491.3 424.2,491.3 437.7,491.3 451.1,491.3 464.6,491.3 478.0,491.3 491.5,491.3 504.9,491.3 518.4,491.3 531.8,491.3 545.3,491.3 558.7,491.3 572.1,491.3 585.6,491.3 599.0,491.3 612.5,491.3 625.9,491.3 639.4,491.3 652.8,491.3 666.3,491.3 679.7,491.3 693.2,491.3 706.6,491.3 720.1,491.3 733.5,491.3 746.9,491.3 760.4,491.3 773.8,491.3 787.3,491.3 800.7,491.3 814.2,491.3 827.6,491.3 841.1,491.3 854.5,491.3 868.0,491.3 881.4,491.3 894.9,491.3 908.3,491.3 921.7,491.3 935.2,491.3 948.6,491.3 962.1,491.3 975.5,491.3 987.0,478.4 973.6,478.4 960.1,478.4 946.7,478.4 933.2,478.4 919.8,478.4 906.4,478.4 892.9,478.4 879.5,478.4 866.0,478.4 852.6,478.4 839.1,478.4 825.7,478.4 812.2,478.4 798.8,478.4 785.3,478.4 771.9,478.4 758.4,478.4 745.0,478.4 731.6,478.4 718.1,478.4 704.7,478.4 691.2,478.4 677.8,478.4 664.3,478.4 650.9,478.4 637.4,478.4 624.0,478.4 610.5,478.4 597.1,478.4 583.6,478.4 570.2,478.4 556.8,478.4 543.3,478.4 529.9,478.4 516.4,478.4 503.0,478.4 489.5,478.4 476.1,478.4 462.6,478.4 449.2,478.4 435.7,478.4 422.3,478.4 408.8,478.4 395.4,482.9 382.0,487.4 368.5,491.8 355.1,496.3 341.6,496.6 328.2,496.9 314.7,497.1 301.3,497.4 287.8,497.7 274.4,498.0 260.9,498.3 247.5,501.8 234.1,505.2 220.6,508.7 207.2,512.2 193.7,512.2 180.3,512.2 166.8,512.2 153.4,512.2 139.9,512.2 126.5,512.2 113.0,512.2 99.6,512.2 86.1,512.2 72.7,512.2" fill="rgba(128,0,0,0.56)" stroke="rgba(0,0,0,0.55)" stroke-width="0.8"/>
<path d="M74.6 525.1l11.5 -12.9M88.1 525.1l11.5 -12.9M101.5 525.1l11.5 -12.9M115.0 525.1l11.5 -12.9M128.4 525.1l11.5 -12.9M141.9 525.1l11.5 -12.9M155.3 525.1l11.5 -12.9M168.8 525.1l11.5 -12.9M182.2 525.1l11.5 -12.9M195.7 525.1l11.5 -12.9M209.1 521.6l11.5 -12.9M222.6 518.1l11.5 -12.9M236.0 514.7l11.5 -12.9M249.4 511.2l11.5 -12.9M262.9 510.9l11.5 -12.9M276.3 510.6l11.5 -12.9M289.8 510.3l11.5 -12.9M303.2 510.0l11.5 -12.9M316.7 509.8l11.5 -12.9M330.1 509.5l11.5 -12.9M343.6 509.2l11.5 -12.9M357.0 504.7l11.5 -12.9M370.5 500.3l11.5 -12.9M383.9 495.8l11.5 -12.9M397.3 491.3l11.5 -12.9M410.8 491.3l11.5 -12.9M424.2 491.3l11.5 -12.9M437.7 491.3l11.5 -12.9M451.1 491.3l11.5 -12.9M464.6 491.3l11.5 -12.9M478.0 491.3l11.5 -12.9M491.5 491.3l11.5 -12.9M504.9 491.3l11.5 -12.9M518.4 491.3l11.5 -12.9M531.8 491.3l11.5 -12.9M545.3 491.3l11.5 -12.9M558.7 491.3l11.5 -12.9M572.1 491.3l11.5 -12.9M585.6 491.3l11.5 -12.9M599.0 491.3l11.5 -12.9M612.5 491.3l11.5 -12.9M625.9 491.3l11.5 -12.9M639.4 491.3l11.5 -12.9M652.8 491.3l11.5 -12.9M666.3 491.3l11.5 -12.9M679.7 491.3l11.5 -12.9M693.2 491.3l11.5 -12.9M706.6 491.3l11.5 -12.9M720.1 491.3l11.5 -12.9M733.5 491.3l11.5 -12.9M746.9 491.3l11.5 -12.9M760.4 491.3l11.5 -12.9M773.8 491.3l11.5 -12.9M787.3 491.3l11.5 -12.9M800.7 491.3l11.5 -12.9M814.2 491.3l11.5 -12.9M827.6 491.3l11.5 -12.9M841.1 491.3l11.5 -12.9M854.5 491.3l11.5 -12.9M868.0 491.3l11.5 -12.9M881.4 491.3l11.5 -12.9M894.9 491.3l11.5 -12.9M908.3 491.3l11.5 -12.9M921.7 491.3l11.5 -12.9M935.2 491.3l11.5 -12.9M948.6 491.3l11.5 -12.9M962.1 491.3l11.5 -12.9" stroke="rgba(0,0,0,0.6)" stroke-width="0.9" fill="none"/>
<polygon points="61.2,523.1 74.6,523.1 88.1,523.1 101.5,523.1 115.0,523.1 128.4,523.1 141.9,523.1 155.3,519.9 168.8,516.7 182.2,513.6 195.7,510.4 209.1,510.4 222.6,510.4 236.0,510.4 249.4,510.4 262.9,510.4 276.3,507.2 289.8,507.2 303.2,507.2 316.7,507.2 330.1,507.2 343.6,507.2 357.0,507.2 370.5,507.2 383.9,507.2 397.3,507.2 410.8,507.2 424.2,507.2 437.7,507.2 451.1,507.2 464.6,507.2 478.0,507.2 491.5,507.2 504.9,507.2 518.4,507.2 531.8,507.2 545.3,507.2 558.7,507.2 572.1,507.2 585.6,507.2 599.0,507.2 612.5,507.2 625.9,507.2 639.4,507.2 652.8,507.2 666.3,507.2 679.7,507.2 693.2,507.2 706.6,507.2 720.1,507.2 733.5,507.2 746.9,503.0 760.4,498.9 773.8,494.7 787.3,494.7 800.7,494.7 814.2,494.7 827.6,494.7 841.1,494.7 854.5,494.7 868.0,494.7 881.4,494.7 894.9,494.7 908.3,494.7 921.7,494.7 935.2,494.7 948.6,494.7 962.1,494.7 975.5,494.7 987.0,481.8 973.6,481.8 960.1,481.8 946.7,481.8 933.2,481.8 919.8,481.8 906.4,481.8 892.9,481.8 879.5,481.8 866.0,481.8 852.6,481.8 839.1,481.8 825.7,481.8 812.2,481.8 798.8,481.8 785.3,481.8 771.9,486.0 758.4,490.1 745.0,494.3 731.6,494.3 718.1,494.3 704.7,494.3 691.2,494.3 677.8,494.3 664.3,494.3 650.9,494.3 637.4,494.3 624.0,494.3 610.5,494.3 597.1,494.3 583.6,494.3 570.2,494.3 556.8,494.3 543.3,494.3 529.9,494.3 516.4,494.3 503.0,494.3 489.5,494.3 476.1,494.3 462.6,494.3 449.2,494.3 435.7,494.3 422.3,494.3 408.8,494.3 395.4,494.3 382.0,494.3 368.5,494.3 355.1,494.3 341.6,494.3 328.2,494.3 314.7,494.3 301.3,494.3 287.8,494.3 274.4,497.5 260.9,497.5 247.5,497.5 234.1,497.5 220.6,497.5 207.2,497.5 193.7,500.7 180.3,503.8 166.8,507.0 153.4,510.2 139.9,510.2 126.5,510.2 113.0,510.2 99.6,510.2 86.1,510.2 72.7,510.2" fill="rgba(128,64,0,0.56)" stroke="rgba(0,0,0,0.55)" stroke-width="0.8"/>
<path d="M74.6 523.1l11.5 -12.9M88.1 523.1l11.5 -12.9M101.5 523.1l11.5 -12.9M115.0 523.1l11.5 -12.9M128.4 523.1l11.5 -12.9M141.9 523.1l11.5 -12.9M155.3 519.9l11.5 -12.9M168.8 516.7l11.5 -12.9M182.2 513.6l11.5 -12.9M195.7 510.4l11.5 -12.9M209.1 510.4l11.5 -12.9M222.6 510.4l11.5 -12.9M236.0 510.4l11.5 -12.9M249.4 510.4l11.5 -12.9M262.9 510.4l11.5 -12.9M276.3 507.2l11.5 -12.9M289.8 507.2l11.5 -12.9M303.2 507.2l11.5 -12.9M316.7 507.2l11.5 -12.9M330.1 507.2l11.5 -12.9M343.6 507.2l11.5 -12.9M357.0 507.2l11.5 -12.9M370.5 507.2l11.5 -12.9M383.9 507.2l11.5 -12.9M397.3 507.2l11.5 -12.9M410.8 507.2l11.5 -12.9M424.2 507.2l11.5 -12.9M437.7 507.2l11.5 -12.9M451.1 507.2l11.5 -12.9M464.6 507.2l11.5 -12.9M478.0 507.2l11.5 -12.9M491.5 507.2l11.5 -12.9M504.9 507.2l11.5 -12.9M518.4 507.2l11.5 -12.9M531.8 507.2l11.5 -12.9M545.3 507.2l11.5 -12.9M558.7 507.2l11.5 -12.9M572.1 507.2l11.5 -12.9M585.6 507.2l11.5 -12.9M599.0 507.2l11.5 -12.9M612.5 507.2l11.5 -12.9M625.9 507.2l11.5 -12.9M639.4 507.2l11.5 -12.9M652.8 507.2l11.5 -12.9M666.3 507.2l11.5 -12.9M679.7 507.2l11.5 -12.9M693.2 507.2l11.5 -12.9M706.6 507.2l11.5 -12.9M720.1 507.2l11.5 -12.9M733.5 507.2l11.5 -12.9M746.9 503.0l11.5 -12.9M760.4 498.9l11.5 -12.9M773.8 494.7l11.5 -12.9M787.3 494.7l11.5 -12.9M800.7 494.7l11.5 -12.9M814.2 494.7l11.5 -12.9M827.6 494.7l11.5 -12.9M841.1 494.7l11.5 -12.9M854.5 494.7l11.5 -12.9M868.0 494.7l11.5 -12.9M881.4 494.7l11.5 -12.9M894.9 494.7l11.5 -12.9M908.3 494.7l11.5 -12.9M921.7 494.7l11.5 -12.9M935.2 494.7l11.5 -12.9M948.6 494.7l11.5 -12.9M962.1 494.7l11.5 -12.9" stroke="rgba(0,0,0,0.6)" stroke-width="0.9" fill="none"/>
<polygon points="61.2,533.4 74.6,533.4 88.1,533.4 101.5,533.4 115.0,533.4 128.4,533.4 141.9,533.4 155.3,533.4 168.8,533.4 182.2,533.4 195.7,533.4 209.1,533.4 222.6,533.4 236.0,533.4 249.4,533.4 262.9,533.4 276.3,533.4 289.8,533.4 303.2,533.4 316.7,533.4 330.1,533.4 343.6,533.4 357.0,533.4 370.5,533.4 383.9,533.4 397.3,533.4 410.8,533.4 424.2,533.4 437.7,533.4 451.1,533.4 464.6,533.4 478.0,533.4 491.5,533.4 504.9,533.4 518.4,533.4 531.8,533.4 545.3,533.4 558.7,533.4 572.1,533.4 585.6,533.4 599.0,533.4 612.5,531.2 625.9,528.9 639.4,526.6 652.8,524.4 666.3,522.1 679.7,519.9 693.2,517.6 706.6,515.3 720.1,513.1 733.5,510.8 746.9,508.6 760.4,506.3 773.8,504.0 787.3,504.0 800.7,504.0 814.2,504.0 827.6,504.0 841.1,504.0 854.5,504.0 868.0,504.0 881.4,504.0 894.9,504.0 908.3,504.0 921.7,504.0 935.2,504.0 948.6,504.0 962.1,504.0 975.5,504.0 987.0,491.1 973.6,491.1 960.1,491.1 946.7,491.1 933.2,491.1 919.8,491.1 906.4,491.1 892.9,491.1 879.5,491.1 866.0,491.1 852.6,491.1 839.1,491.1 825.7,491.1 812.2,491.1 798.8,491.1 785.3,491.1 771.9,493.4 758.4,495.7 745.0,497.9 731.6,500.2 718.1,502.4 704.7,504.7 691.2,507.0 677.8,509.2 664.3,511.5 650.9,513.7 637.4,516.0 624.0,518.3 610.5,520.5 597.1,520.5 583.6,520.5 570.2,520.5 556.8,520.5 543.3,520.5 529.9,520.5 516.4,520.5 503.0,520.5 489.5,520.5 476.1,520.5 462.6,520.5 449.2,520.5 435.7,520.5 422.3,520.5 408.8,520.5 395.4,520.5 382.0,520.5 368.5,520.5 355.1,520.5 341.6,520.5 328.2,520.5 314.7,520.5 301.3,520.5 287.8,520.5 274.4,520.5 260.9,520.5 247.5,520.5 234.1,520.5 220.6,520.5 207.2,520.5 193.7,520.5 180.3,520.5 166.8,520.5 153.4,520.5 139.9,520.5 126.5,520.5 113.0,520.5 99.6,520.5 86.1,520.5 72.7,520.5" fill="rgba(128,128,0,0.56)" stroke="rgba(0,0,0,0.55)" stroke-width="0.8"/>
<path d="M74.6 533.4l11.5 -12.9M88.1 533.4l11.5 -12.9M101.5 533.4l11.5 -12.9M115.0 533.4l11.5 -12.9M128.4 533.4l11.5 -12.9M141.9 533.4l11.5 -12.9M155.3 533.4l11.5 -12.9M168.8 533.4l11.5 -12.9M182.2 533.4l11.5 -12.9M195.7 533.4l11.5 -12.9M209.1 533.4l11.5 -12.9M222.6 533.4l11.5 -12.9M236.0 533.4l11.5 -12.9M249.4 533.4l11.5 -12.9M262.9 533.4l11.5 -12.9M276.3 533.4l11.5 -12.9M289.8 533.4l11.5 -12.9M303.2 533.4l11.5 -12.9M316.7 533.4l11.5 -12.9M330.1 533.4l11.5 -12.9M343.6 533.4l11.5 -12.9M357.0 533.4l11.5 -12.9M370.5 533.4l11.5 -12.9M383.9 533.4l11.5 -12.9M397.3 533.4l11.5 -12.9M410.8 533.4l11.5 -12.9M424.2 533.4l11.5 -12.9M437.7 533.4l11.5 -12.9M451.1 533.4l11.5 -12.9M464.6 533.4l11.5 -12.9M478.0 533.4l11.5 -12.9M491.5 533.4l11.5 -12.9M504.9 533.4l11.5 -12.9M518.4 533.4l11.5 -12.9M531.8 533.4l11.5 -12.9M545.3 533.4l11.5 -12.9M558.7 533.4l11.5 -12.9M572.1 533.4l11.5 -12.9M585.6 533.4l11.5 -12.9M599.0 533.4l11.5 -12.9M612.5 531.2l11.5 -12.9M625.9 528.9l11.5 -12.9M639.4 526.6l11.5 -12.9M652.8 524.4l11.5 -12.9M666.3 522.1l11.5 -12.9M679.7 519.9l11.5 -12.9M693.2 517.6l11.5 -12.9M706.6 515.3l11.5 -12.9M720.1 513.1l11.5 -12.9M733.5 510.8l11.5 -12.9M746.9 508.6l11.5 -12.9M760.4 506.3l11.5 -12.9M773.8 504.0l11.5 -12.9M787.3 504.0l11.5 -12.9M800.7 504.0l11.5 -12.9M814.2 504.0l11.5 -12.9M827.6 504.0l11.5 -12.9M841.1 504.0l11.5 -12.9M854.5 504.0l11.5 -12.9M868.0 504.0l11.5 -12.9M881.4 504.0l11.5 -12.9M894.9 504.0l11.5 -12.9M908.3 504.0l11.5 -12.9M921.7 504.0l11.5 -12.9M935.2 504.0l11.5 -12.9M948.6 504.0l11.5 -12.9M962.1 504.0l11.5 -12.9" stroke="rgba(0,0,0,0.6)" stroke-width="0.9" fill="none"/>
<polygon points="61.2,519.1 74.6,519.0 88.1,518.9 101.5,518.8 115.0,518.7 128.4,518.6 141.9,518.5 155.3,518.4 168.8,518.3 182.2,518.2 195.7,518.1 209.1,518.0 222.6,517.9 236.0,517.8 249.4,517.7 262.9,517.6 276.3,517.5 289.8,517.4 303.2,517.3 316.7,517.2 330.1,517.1 343.6,517.1 357.0,517.1 370.5,517.0 383.9,517.0 397.3,516.9 410.8,516.9 424.2,516.9 437.7,516.8 451.1,516.8 464.6,516.7 478.0,516.7 491.5,516.7 504.9,516.6 518.4,516.6 531.8,516.5 545.3,516.5 558.7,516.5 572.1,516.4 585.6,516.4 599.0,516.3 612.5,516.3 625.9,516.3 639.4,516.2 652.8,516.2 666.3,516.1 679.7,516.1 693.2,516.1 706.6,516.0 720.1,516.0 733.5,515.9 746.9,515.9 760.4,515.9 773.8,515.9 787.3,515.9 800.7,515.9 814.2,515.9 827.6,515.9 841.1,515.9 854.5,515.9 868.0,515.9 881.4,515.9 894.9,515.9 908.3,515.9 921.7,515.9 935.2,515.9 948.6,515.9 962.1,515.9 975.5,515.9 987.0,503.0 973.6,503.0 960.1,503.0 946.7,503.0 933.2,503.0 919.8,503.0 906.4,503.0 892.9,503.0 879.5,503.0 866.0,503.0 852.6,503.0 839.1,503.0 825.7,503.0 812.2,503.0 798.8,503.0 785.3,503.0 771.9,503.0 758.4,503.0 745.0,503.0 731.6,503.1 718.1,503.1 704.7,503.2 691.2,503.2 677.8,503.2 664.3,503.3 650.9,503.3 637.4,503.4 624.0,503.4 610.5,503.4 597.1,503.5 583.6,503.5 570.2,503.6 556.8,503.6 543.3,503.6 529.9,503.7 516.4,503.7 503.0,503.8 489.5,503.8 476.1,503.8 462.6,503.9 449.2,503.9 435.7,504.0 422.3,504.0 408.8,504.0 395.4,504.1 382.0,504.1 368.5,504.2 355.1,504.2 341.6,504.2 328.2,504.3 314.7,504.4 301.3,504.5 287.8,504.6 274.4,504.7 260.9,504.8 247.5,504.9 234.1,505.0 220.6,505.1 207.2,505.2 193.7,505.3 180.3,505.4 166.8,505.5 153.4,505.6 139.9,505.7 126.5,505.8 113.0,505.9 99.6,506.0 86.1,506.1 72.7,506.2" fill="rgba(128,0,128,0.56)" stroke="rgba(0,0,0,0.55)" stroke-width="0.8"/>
<path d="M74.6 519.0l11.5 -12.9M88.1 518.9l11.5 -12.9M101.5 518.8l11.5 -12.9M115.0 518.7l11.5 -12.9M128.4 518.6l11.5 -12.9M141.9 518.5l11.5 -12.9M155.3 518.4l11.5 -12.9M168.8 518.3l11.5 -12.9M182.2 518.2l11.5 -12.9M195.7 518.1l11.5 -12.9M209.1 518.0l11.5 -12.9M222.6 517.9l11.5 -12.9M236.0 517.8l11.5 -12.9M249.4 517.7l11.5 -12.9M262.9 517.6l11.5 -12.9M276.3 517.5l11.5 -12.9M289.8 517.4l11.5 -12.9M303.2 517.3l11.5 -12.9M316.7 517.2l11.5 -12.9M330.1 517.1l11.5 -12.9M343.6 517.1l11.5 -12.9M357.0 517.1l11.5 -12.9M370.5 517.0l11.5 -12.9M383.9 517.0l11.5 -12.9M397.3 516.9l11.5 -12.9M410.8 516.9l11.5 -12.9M424.2 516.9l11.5 -12.9M437.7 516.8l11.5 -12.9M451.1 516.8l11.5 -12.9M464.6 516.7l11.5 -12.9M478.0 516.7l11.5 -12.9M491.5 516.7l11.5 -12.9M504.9 516.6l11.5 -12.9M518.4 516.6l11.5 -12.9M531.8 516.5l11.5 -12.9M545.3 516.5l11.5 -12.9M558.7 516.5l11.5 -12.9M572.1 516.4l11.5 -12.9M585.6 516.4l11.5 -12.9M599.0 516.3l11.5 -12.9M612.5 516.3l11.5 -12.9M625.9 516.3l11.5 -12.9M639.4 516.2l11.5 -12.9M652.8 516.2l11.5 -12.9M666.3 516.1l11.5 -12.9M679.7 516.1l11.5 -12.9M693.2 516.1l11.5 -12.9M706.6 516.0l11.5 -12.9M720.1 516.0l11.5 -12.9M733.5 515.9l11.5 -12.9M746.9 515.9l11.5 -12.9M760.4 515.9l11.5 -12.9M773.8 515.9l11.5 -12.9M787.3 515.9l11.5 -12.9M800.7 515.9l11.5 -12.9M814.2 515.9l11.5 -12.9M827.6 515.9l11.5 -12.9M841.1 515.9l11.5 -12.9M854.5 515.9l11.5 -12.9M868.0 515.9l11.5 -12.9M881.4 515.9l11.5 -12.9M894.9 515.9l11.5 -12.9M908.3 515.9l11.5 -12.9M921.7 515.9l11.5 -12.9M935.2 515.9l11.5 -12.9M948.6 515.9l11.5 -12.9M962.1 515.9l11.5 -12.9" stroke="rgba(0,0,0,0.6)" stroke-width="0.9" fill="none"/>
<polygon points="61.2,531.0 74.6,531.0 88.1,531.0 101.5,531.0 115.0,531.0 128.4,531.0 141.9,531.0 155.3,531.0 168.8,531.0 182.2,531.0 195.7,531.0 209.1,531.0 222.6,531.0 236.0,531.0 249.4,531.0 262.9,531.0 276.3,531.0 289.8,531.0 303.2,531.0 316.7,531.0 330.1,531.0 343.6,531.0 357.0,531.0 370.5,531.0 383.9,531.0 397.3,531.0 410.8,531.0 424.2,531.0 437.7,531.0 451.1,531.0 464.6,531.0 478.0,531.0 491.5,531.0 504.9,531.0 518.4,531.0 531.8,531.0 545.3,531.0 558.7,531.0 572.1,531.0 585.6,531.0 599.0,531.0 612.5,531.0 625.9,531.0 639.4,531.0 652.8,531.0 666.3,531.0 679.7,531.0 693.2,531.0 706.6,531.0 720.1,531.0 733.5,531.0 746.9,531.0 760.4,531.0 773.8,531.0 787.3,531.0 800.7,531.0 814.2,531.0 827.6,531.0 841.1,531.0 854.5,531.0 868.0,531.0 881.4,531.0 894.9,531.0 908.3,531.0 921.7,531.0 935.2,531.0 948.6,531.0 962.1,531.0 975.5,531.0 987.0,518.1 973.6,518.1 960.1,518.1 946.7,518.1 933.2,518.1 919.8,518.1 906.4,518.1 892.9,518.1 879.5,518.1 866.0,518.1 852.6,518.1 839.1,518.1 825.7,518.1 812.2,518.1 798.8,518.1 785.3,518.1 771.9,518.1 758.4,518.1 745.0,518.1 731.6,518.1 718.1,518.1 704.7,518.1 691.2,518.1 677.8,518.1 664.3,518.1 650.9,518.1 637.4,518.1 624.0,518.1 610.5,518.1 597.1,518.1 583.6,518.1 570.2,518.1 556.8,518.1 543.3,518.1 529.9,518.1 516.4,518.1 503.0,518.1 489.5,518.1 476.1,518.1 462.6,518.1 449.2,518.1 435.7,518.1 422.3,518.1 408.8,518.1 395.4,518.1 382.0,518.1 368.5,518.1 355.1,518.1 341.6,518.1 328.2,518.1 314.7,518.1 301.3,518.1 287.8,518.1 274.4,518.1 260.9,518.1 247.5,518.1 234.1,518.1 220.6,518.1 207.2,518.1 193.7,518.1 180.3,518.1 166.8,518.1 153.4,518.1 139.9,518.1 126.5,518.1 113.0,518.1 99.6,518.1 86.1,518.1 72.7,518.1" fill="rgba(128,128,128,0.4)" stroke="rgba(0,0,0,0.55)" stroke-width="0.8"/>
<path d="M74.6 531.0l11.5 -12.9M88.1 531.0l11.5 -12.9M101.5 531.0l11.5 -12.9M115.0 531.0l11.5 -12.9M128.4 531.0l11.5 -12.9M141.9 531.0l11.5 -12.9M155.3 531.0l11.5 -12.9M168.8 531.0l11.5 -12.9M182.2 531.0l11.5 -12.9M195.7 531.0l11.5 -12.9M209.1 531.0l11.5 -12.9M222.6 531.0l11.5 -12.9M236.0 531.0l11.5 -12.9M249.4 531.0l11.5 -12.9M262.9 531.0l11.5 -12.9M276.3 531.0l11.5 -12.9M289.8 531.0l11.5 -12.9M303.2 531.0l11.5 -12.9M316.7 531.0l11.5 -12.9M330.1 531.0l11.5 -12.9M343.6 531.0l11.5 -12.9M357.0 531.0l11.5 -12.9M370.5 531.0l11.5 -12.9M383.9 531.0l11.5 -12.9M397.3 531.0l11.5 -12.9M410.8 531.0l11.5 -12.9M424.2 531.0l11.5 -12.9M437.7 531.0l11.5 -12.9M451.1 531.0l11.5 -12.9M464.6 531.0l11.5 -12.9M478.0 531.0l11.5 -12.9M491.5 531.0l11.5 -12.9M504.9 531.0l11.5 -12.9M518.4 531.0l11.5 -12.9M531.8 531.0l11.5 -12.9M545.3 531.0l11.5 -12.9M558.7 531.0l11.5 -12.9M572.1 531.0l11.5 -12.9M585.6 531.0l11.5 -12.9M599.0 531.0l11.5 -12.9M612.5 531.0l11.5 -12.9M625.9 531.0l11.5 -12.9M639.4 531.0l11.5 -12.9M652.8 531.0l11.5 -12.9M666.3 531.0l11.5 -12.9M679.7 531.0l11.5 -12.9M693.2 531.0l11.5 -12.9M706.6 531.0l11.5 -12.9M720.1 531.0l11.5 -12.9M733.5 531.0l11.5 -12.9M746.9 531.0l11.5 -12.9M760.4 531.0l11.5 -12.9M773.8 531.0l11.5 -12.9M787.3 531.0l11.5 -12.9M800.7 531.0l11.5 -12.9M814.2 531.0l11.5 -12.9M827.6 531.0l11.5 -12.9M841.1 531.0l11.5 -12.9M854.5 531.0l11.5 -12.9M868.0 531.0l11.5 -12.9M881.4 531.0l11.5 -12.9M894.9 531.0l11.5 -12.9M908.3 531.0l11.5 -12.9M921.7 531.0l11.5 -12.9M935.2 531.0l11.5 -12.9M948.6 531.0l11.5 -12.9M962.1 531.0l11.5 -12.9" stroke="rgba(0,0,0,0.6)" stroke-width="0.9" fill="none"/>
<polygon points="61.2,522.3 74.6,522.3 88.1,522.3 101.5,522.3 115.0,522.3 128.4,522.3 141.9,522.3 155.3,518.7 168.8,515.1 182.2,511.6 195.7,511.5 209.1,511.5 222.6,511.5 236.0,511.5 249.4,511.4 262.9,511.4 276.3,511.4 289.8,511.3 303.2,511.3 316.7,511.3 330.1,511.2 343.6,511.2 357.0,511.2 370.5,511.1 383.9,511.1 397.3,511.1 410.8,511.0 424.2,511.0 437.7,511.0 451.1,511.0 464.6,510.9 478.0,510.9 491.5,510.9 504.9,510.8 518.4,510.8 531.8,510.8 545.3,510.7 558.7,510.7 572.1,510.7 585.6,510.6 599.0,510.6 612.5,510.6 625.9,510.5 639.4,510.5 652.8,510.5 666.3,510.5 679.7,510.4 693.2,510.4 706.6,510.4 720.1,510.3 733.5,510.3 746.9,510.3 760.4,510.2 773.8,510.2 787.3,510.2 800.7,510.1 814.2,510.1 827.6,510.1 841.1,510.1 854.5,510.0 868.0,510.0 881.4,510.0 894.9,510.0 908.3,510.0 921.7,510.0 935.2,510.0 948.6,510.0 962.1,510.0 975.5,510.0 987.0,497.1 973.6,497.1 960.1,497.1 946.7,497.1 933.2,497.1 919.8,497.1 906.4,497.1 892.9,497.1 879.5,497.1 866.0,497.1 852.6,497.2 839.1,497.2 825.7,497.2 812.2,497.2 798.8,497.3 785.3,497.3 771.9,497.3 758.4,497.4 745.0,497.4 731.6,497.4 718.1,497.5 704.7,497.5 691.2,497.5 677.8,497.6 664.3,497.6 650.9,497.6 637.4,497.6 624.0,497.7 610.5,497.7 597.1,497.7 583.6,497.8 570.2,497.8 556.8,497.8 543.3,497.9 529.9,497.9 516.4,497.9 503.0,498.0 489.5,498.0 476.1,498.0 462.6,498.1 449.2,498.1 435.7,498.1 422.3,498.1 408.8,498.2 395.4,498.2 382.0,498.2 368.5,498.3 355.1,498.3 341.6,498.3 328.2,498.4 314.7,498.4 301.3,498.4 287.8,498.5 274.4,498.5 260.9,498.5 247.5,498.6 234.1,498.6 220.6,498.6 207.2,498.6 193.7,498.7 180.3,502.2 166.8,505.8 153.4,509.4 139.9,509.4 126.5,509.4 113.0,509.4 99.6,509.4 86.1,509.4 72.7,509.4" fill="rgba(232,150,160,0.6)" stroke="rgba(0,0,0,0.55)" stroke-width="0.8"/>
<path d="M74.6 522.3l11.5 -12.9M88.1 522.3l11.5 -12.9M101.5 522.3l11.5 -12.9M115.0 522.3l11.5 -12.9M128.4 522.3l11.5 -12.9M141.9 522.3l11.5 -12.9M155.3 518.7l11.5 -12.9M168.8 515.1l11.5 -12.9M182.2 511.6l11.5 -12.9M195.7 511.5l11.5 -12.9M209.1 511.5l11.5 -12.9M222.6 511.5l11.5 -12.9M236.0 511.5l11.5 -12.9M249.4 511.4l11.5 -12.9M262.9 511.4l11.5 -12.9M276.3 511.4l11.5 -12.9M289.8 511.3l11.5 -12.9M303.2 511.3l11.5 -12.9M316.7 511.3l11.5 -12.9M330.1 511.2l11.5 -12.9M343.6 511.2l11.5 -12.9M357.0 511.2l11.5 -12.9M370.5 511.1l11.5 -12.9M383.9 511.1l11.5 -12.9M397.3 511.1l11.5 -12.9M410.8 511.0l11.5 -12.9M424.2 511.0l11.5 -12.9M437.7 511.0l11.5 -12.9M451.1 511.0l11.5 -12.9M464.6 510.9l11.5 -12.9M478.0 510.9l11.5 -12.9M491.5 510.9l11.5 -12.9M504.9 510.8l11.5 -12.9M518.4 510.8l11.5 -12.9M531.8 510.8l11.5 -12.9M545.3 510.7l11.5 -12.9M558.7 510.7l11.5 -12.9M572.1 510.7l11.5 -12.9M585.6 510.6l11.5 -12.9M599.0 510.6l11.5 -12.9M612.5 510.6l11.5 -12.9M625.9 510.5l11.5 -12.9M639.4 510.5l11.5 -12.9M652.8 510.5l11.5 -12.9M666.3 510.5l11.5 -12.9M679.7 510.4l11.5 -12.9M693.2 510.4l11.5 -12.9M706.6 510.4l11.5 -12.9M720.1 510.3l11.5 -12.9M733.5 510.3l11.5 -12.9M746.9 510.3l11.5 -12.9M760.4 510.2l11.5 -12.9M773.8 510.2l11.5 -12.9M787.3 510.2l11.5 -12.9M800.7 510.1l11.5 -12.9M814.2 510.1l11.5 -12.9M827.6 510.1l11.5 -12.9M841.1 510.1l11.5 -12.9M854.5 510.0l11.5 -12.9M868.0 510.0l11.5 -12.9M881.4 510.0l11.5 -12.9M894.9 510.0l11.5 -12.9M908.3 510.0l11.5 -12.9M921.7 510.0l11.5 -12.9M935.2 510.0l11.5 -12.9M948.6 510.0l11.5 -12.9M962.1 510.0l11.5 -12.9" stroke="rgba(0,0,0,0.6)" stroke-width="0.9" fill="none"/>
<polygon points="61.2,475.4 74.6,475.4 88.1,475.4 101.5,475.4 115.0,475.4 128.4,471.5 141.9,467.5 155.3,467.5 168.8,467.5 182.2,467.5 195.7,467.5 209.1,467.5 222.6,467.5 236.0,467.5 249.4,467.5 262.9,467.5 276.3,467.5 289.8,467.5 303.2,467.5 316.7,467.5 330.1,467.5 343.6,467.5 357.0,467.5 370.5,467.5 383.9,467.5 397.3,467.5 410.8,467.5 424.2,467.5 437.7,467.5 451.1,467.5 464.6,467.5 478.0,467.5 491.5,467.5 504.9,467.5 518.4,467.5 531.8,467.5 545.3,467.5 558.7,467.5 572.1,467.5 585.6,467.5 599.0,467.5 612.5,467.5 625.9,467.5 639.4,467.5 652.8,467.5 666.3,467.5 679.7,467.5 693.2,467.5 706.6,467.5 720.1,467.5 733.5,467.5 746.9,467.5 760.4,467.5 773.8,467.5 787.3,467.5 800.7,467.5 814.2,467.5 827.6,467.5 841.1,467.5 854.5,467.5 868.0,467.5 881.4,467.5 894.9,467.5 908.3,467.5 921.7,467.5 935.2,467.5 948.6,467.5 962.1,467.5 975.5,467.5 987.0,454.6 973.6,454.6 960.1,454.6 946.7,454.6 933.2,454.6 919.8,454.6 906.4,454.6 892.9,454.6 879.5,454.6 866.0,454.6 852.6,454.6 839.1,454.6 825.7,454.6 812.2,454.6 798.8,454.6 785.3,454.6 771.9,454.6 758.4,454.6 745.0,454.6 731.6,454.6 718.1,454.6 704.7,454.6 691.2,454.6 677.8,454.6 664.3,454.6 650.9,454.6 637.4,454.6 624.0,454.6 610.5,454.6 597.1,454.6 583.6,454.6 570.2,454.6 556.8,454.6 543.3,454.6 529.9,454.6 516.4,454.6 503.0,454.6 489.5,454.6 476.1,454.6 462.6,454.6 449.2,454.6 435.7,454.6 422.3,454.6 408.8,454.6 395.4,454.6 382.0,454.6 368.5,454.6 355.1,454.6 341.6,454.6 328.2,454.6 314.7,454.6 301.3,454.6 287.8,454.6 274.4,454.6 260.9,454.6 247.5,454.6 234.1,454.6 220.6,454.6 207.2,454.6 193.7,454.6 180.3,454.6 166.8,454.6 153.4,454.6 139.9,458.6 126.5,462.6 113.0,462.6 99.6,462.6 86.1,462.6 72.7,462.6" fill="rgba(255,0,255,0.56)" stroke="rgba(0,0,0,0.55)" stroke-width="0.8"/>
<path d="M74.6 475.4l11.5 -12.9M88.1 475.4l11.5 -12.9M101.5 475.4l11.5 -12.9M115.0 475.4l11.5 -12.9M128.4 471.5l11.5 -12.9M141.9 467.5l11.5 -12.9M155.3 467.5l11.5 -12.9M168.8 467.5l11.5 -12.9M182.2 467.5l11.5 -12.9M195.7 467.5l11.5 -12.9M209.1 467.5l11.5 -12.9M222.6 467.5l11.5 -12.9M236.0 467.5l11.5 -12.9M249.4 467.5l11.5 -12.9M262.9 467.5l11.5 -12.9M276.3 467.5l11.5 -12.9M289.8 467.5l11.5 -12.9M303.2 467.5l11.5 -12.9M316.7 467.5l11.5 -12.9M330.1 467.5l11.5 -12.9M343.6 467.5l11.5 -12.9M357.0 467.5l11.5 -12.9M370.5 467.5l11.5 -12.9M383.9 467.5l11.5 -12.9M397.3 467.5l11.5 -12.9M410.8 467.5l11.5 -12.9M424.2 467.5l11.5 -12.9M437.7 467.5l11.5 -12.9M451.1 467.5l11.5 -12.9M464.6 467.5l11.5 -12.9M478.0 467.5l11.5 -12.9M491.5 467.5l11.5 -12.9M504.9 467.5l11.5 -12.9M518.4 467.5l11.5 -12.9M531.8 467.5l11.5 -12.9M545.3 467.5l11.5 -12.9M558.7 467.5l11.5 -12.9M572.1 467.5l11.5 -12.9M585.6 467.5l11.5 -12.9M599.0 467.5l11.5 -12.9M612.5 467.5l11.5 -12.9M625.9 467.5l11.5 -12.9M639.4 467.5l11.5 -12.9M652.8 467.5l11.5 -12.9M666.3 467.5l11.5 -12.9M679.7 467.5l11.5 -12.9M693.2 467.5l11.5 -12.9M706.6 467.5l11.5 -12.9M720.1 467.5l11.5 -12.9M733.5 467.5l11.5 -12.9M746.9 467.5l11.5 -12.9M760.4 467.5l11.5 -12.9M773.8 467.5l11.5 -12.9M787.3 467.5l11.5 -12.9M800.7 467.5l11.5 -12.9M814.2 467.5l11.5 -12.9M827.6 467.5l11.5 -12.9M841.1 467.5l11.5 -12.9M854.5 467.5l11.5 -12.9M868.0 467.5l11.5 -12.9M881.4 467.5l11.5 -12.9M894.9 467.5l11.5 -12.9M908.3 467.5l11.5 -12.9M921.7 467.5l11.5 -12.9M935.2 467.5l11.5 -12.9M948.6 467.5l11.5 -12.9M962.1 467.5l11.5 -12.9" stroke="rgba(0,0,0,0.6)" stroke-width="0.9" fill="none"/>
<polygon points="61.2,534.2 74.6,534.2 88.1,534.2 101.5,534.2 115.0,534.2 128.4,534.2 141.9,534.2 155.3,534.2 168.8,534.2 182.2,534.2 195.7,534.2 209.1,534.2 222.6,534.2 236.0,534.2 249.4,530.0 262.9,530.0 276.3,530.0 289.8,530.0 303.2,530.0 316.7,530.0 330.1,530.0 343.6,530.0 357.0,530.0 370.5,530.0 383.9,530.0 397.3,530.0 410.8,530.0 424.2,530.0 437.7,530.0 451.1,530.0 464.6,530.0 478.0,530.0 491.5,530.0 504.9,530.0 518.4,530.0 531.8,530.0 545.3,530.0 558.7,530.0 572.1,530.0 585.6,530.0 599.0,530.0 612.5,530.0 625.9,530.0 639.4,530.0 652.8,530.0 666.3,530.0 679.7,530.0 693.2,530.0 706.6,530.0 720.1,530.0 733.5,530.0 746.9,530.0 760.4,530.0 773.8,530.0 787.3,530.0 800.7,530.0 814.2,530.0 827.6,530.0 841.1,530.0 854.5,530.0 868.0,530.0 881.4,530.0 894.9,530.0 908.3,530.0 921.7,530.0 935.2,530.0 948.6,530.0 962.1,530.0 975.5,530.0 987.0,517.1 973.6,517.1 960.1,517.1 946.7,517.1 933.2,517.1 919.8,517.1 906.4,517.1 892.9,517.1 879.5,517.1 866.0,517.1 852.6,517.1 839.1,517.1 825.7,517.1 812.2,517.1 798.8,517.1 785.3,517.1 771.9,517.1 758.4,517.1 745.0,517.1 731.6,517.1 718.1,517.1 704.7,517.1 691.2,517.1 677.8,517.1 664.3,517.1 650.9,517.1 637.4,517.1 624.0,517.1 610.5,517.1 597.1,517.1 583.6,517.1 570.2,517.1 556.8,517.1 543.3,517.1 529.9,517.1 516.4,517.1 503.0,517.1 489.5,517.1 476.1,517.1 462.6,517.1 449.2,517.1 435.7,517.1 422.3,517.1 408.8,517.1 395.4,517.1 382.0,517.1 368.5,517.1 355.1,517.1 341.6,517.1 328.2,517.1 314.7,517.1 301.3,517.1 287.8,517.1 274.4,517.1 260.9,517.1 247.5,521.3 234.1,521.3 220.6,521.3 207.2,521.3 193.7,521.3 180.3,521.3 166.8,521.3 153.4,521.3 139.9,521.3 126.5,521.3 113.0,521.3 99.6,521.3 86.1,521.3 72.7,521.3" fill="rgba(250,250,250,0.92)" stroke="rgba(0,0,0,0.55)" stroke-width="0.8"/>
<path d="M74.6 534.2l11.5 -12.9M88.1 534.2l11.5 -12.9M101.5 534.2l11.5 -12.9M115.0 534.2l11.5 -12.9M128.4 534.2l11.5 -12.9M141.9 534.2l11.5 -12.9M155.3 534.2l11.5 -12.9M168.8 534.2l11.5 -12.9M182.2 534.2l11.5 -12.9M195.7 534.2l11.5 -12.9M209.1 534.2l11.5 -12.9M222.6 534.2l11.5 -12.9M236.0 534.2l11.5 -12.9M249.4 530.0l11.5 -12.9M262.9 530.0l11.5 -12.9M276.3 530.0l11.5 -12.9M289.8 530.0l11.5 -12.9M303.2 530.0l11.5 -12.9M316.7 530.0l11.5 -12.9M330.1 530.0l11.5 -12.9M343.6 530.0l11.5 -12.9M357.0 530.0l11.5 -12.9M370.5 530.0l11.5 -12.9M383.9 530.0l11.5 -12.9M397.3 530.0l11.5 -12.9M410.8 530.0l11.5 -12.9M424.2 530.0l11.5 -12.9M437.7 530.0l11.5 -12.9M451.1 530.0l11.5 -12.9M464.6 530.0l11.5 -12.9M478.0 530.0l11.5 -12.9M491.5 530.0l11.5 -12.9M504.9 530.0l11.5 -12.9M518.4 530.0l11.5 -12.9M531.8 530.0l11.5 -12.9M545.3 530.0l11.5 -12.9M558.7 530.0l11.5 -12.9M572.1 530.0l11.5 -12.9M585.6 530.0l11.5 -12.9M599.0 530.0l11.5 -12.9M612.5 530.0l11.5 -12.9M625.9 530.0l11.5 -12.9M639.4 530.0l11.5 -12.9M652.8 530.0l11.5 -12.9M666.3 530.0l11.5 -12.9M679.7 530.0l11.5 -12.9M693.2 530.0l11.5 -12.9M706.6 530.0l11.5 -12.9M720.1 530.0l11.5 -12.9M733.5 530.0l11.5 -12.9M746.9 530.0l11.5 -12.9M760.4 530.0l11.5 -12.9M773.8 530.0l11.5 -12.9M787.3 530.0l11.5 -12.9M800.7 530.0l11.5 -12.9M814.2 530.0l11.5 -12.9M827.6 530.0l11.5 -12.9M841.1 530.0l11.5 -12.9M854.5 530.0l11.5 -12.9M868.0 530.0l11.5 -12.9M881.4 530.0l11.5 -12.9M894.9 530.0l11.5 -12.9M908.3 530.0l11.5 -12.9M921.7 530.0l11.5 -12.9M935.2 530.0l11.5 -12.9M948.6 530.0l11.5 -12.9M962.1 530.0l11.5 -12.9" stroke="rgba(0,0,0,0.6)" stroke-width="0.9" fill="none"/>
<polygon points="61.2,532.0 74.6,532.0 88.1,532.0 101.5,532.0 115.0,532.0 128.4,532.0 141.9,532.0 155.3,532.0 168.8,532.0 182.2,532.0 195.7,532.0 209.1,532.0 222.6,532.0 236.0,532.0 249.4,532.0 262.9,532.0 276.3,532.0 289.8,532.0 303.2,532.0 316.7,532.0 330.1,532.0 343.6,532.0 357.0,532.0 370.5,532.0 383.9,532.0 397.3,532.0 410.8,532.0 424.2,532.0 437.7,532.0 451.1,532.0 464.6,532.0 478.0,532.0 491.5,532.0 504.9,532.0 518.4,532.0 531.8,532.0 545.3,532.0 558.7,532.0 572.1,532.0 585.6,532.0 599.0,532.0 612.5,532.0 625.9,532.0 639.4,532.0 652.8,532.0 666.3,532.0 679.7,532.0 693.2,532.0 706.6,532.0 720.1,532.0 733.5,532.0 746.9,532.0 760.4,532.0 773.8,532.0 787.3,532.0 800.7,532.0 814.2,532.0 827.6,532.0 841.1,532.0 854.5,532.0 868.0,532.0 881.4,532.0 894.9,532.0 908.3,532.0 921.7,532.0 935.2,532.0 948.6,532.0 962.1,532.0 975.5,532.0 987.0,519.1 973.6,519.1 960.1,519.1 946.7,519.1 933.2,519.1 919.8,519.1 906.4,519.1 892.9,519.1 879.5,519.1 866.0,519.1 852.6,519.1 839.1,519.1 825.7,519.1 812.2,519.1 798.8,519.1 785.3,519.1 771.9,519.1 758.4,519.1 745.0,519.1 731.6,519.1 718.1,519.1 704.7,519.1 691.2,519.1 677.8,519.1 664.3,519.1 650.9,519.1 637.4,519.1 624.0,519.1 610.5,519.1 597.1,519.1 583.6,519.1 570.2,519.1 556.8,519.1 543.3,519.1 529.9,519.1 516.4,519.1 503.0,519.1 489.5,519.1 476.1,519.1 462.6,519.1 449.2,519.1 435.7,519.1 422.3,519.1 408.8,519.1 395.4,519.1 382.0,519.1 368.5,519.1 355.1,519.1 341.6,519.1 328.2,519.1 314.7,519.1 301.3,519.1 287.8,519.1 274.4,519.1 260.9,519.1 247.5,519.1 234.1,519.1 220.6,519.1 207.2,519.1 193.7,519.1 180.3,519.1 166.8,519.1 153.4,519.1 139.9,519.1 126.5,519.1 113.0,519.1 99.6,519.1 86.1,519.1 72.7,519.1" fill="rgba(40,150,60,0.5)" stroke="rgba(0,0,0,0.55)" stroke-width="0.8"/>
<path d="M74.6 532.0l11.5 -12.9M88.1 532.0l11.5 -12.9M101.5 532.0l11.5 -12.9M115.0 532.0l11.5 -12.9M128.4 532.0l11.5 -12.9M141.9 532.0l11.5 -12.9M155.3 532.0l11.5 -12.9M168.8 532.0l11.5 -12.9M182.2 532.0l11.5 -12.9M195.7 532.0l11.5 -12.9M209.1 532.0l11.5 -12.9M222.6 532.0l11.5 -12.9M236.0 532.0l11.5 -12.9M249.4 532.0l11.5 -12.9M262.9 532.0l11.5 -12.9M276.3 532.0l11.5 -12.9M289.8 532.0l11.5 -12.9M303.2 532.0l11.5 -12.9M316.7 532.0l11.5 -12.9M330.1 532.0l11.5 -12.9M343.6 532.0l11.5 -12.9M357.0 532.0l11.5 -12.9M370.5 532.0l11.5 -12.9M383.9 532.0l11.5 -12.9M397.3 532.0l11.5 -12.9M410.8 532.0l11.5 -12.9M424.2 532.0l11.5 -12.9M437.7 532.0l11.5 -12.9M451.1 532.0l11.5 -12.9M464.6 532.0l11.5 -12.9M478.0 532.0l11.5 -12.9M491.5 532.0l11.5 -12.9M504.9 532.0l11.5 -12.9M518.4 532.0l11.5 -12.9M531.8 532.0l11.5 -12.9M545.3 532.0l11.5 -12.9M558.7 532.0l11.5 -12.9M572.1 532.0l11.5 -12.9M585.6 532.0l11.5 -12.9M599.0 532.0l11.5 -12.9M612.5 532.0l11.5 -12.9M625.9 532.0l11.5 -12.9M639.4 532.0l11.5 -12.9M652.8 532.0l11.5 -12.9M666.3 532.0l11.5 -12.9M679.7 532.0l11.5 -12.9M693.2 532.0l11.5 -12.9M706.6 532.0l11.5 -12.9M720.1 532.0l11.5 -12.9M733.5 532.0l11.5 -12.9M746.9 532.0l11.5 -12.9M760.4 532.0l11.5 -12.9M773.8 532.0l11.5 -12.9M787.3 532.0l11.5 -12.9M800.7 532.0l11.5 -12.9M814.2 532.0l11.5 -12.9M827.6 532.0l11.5 -12.9M841.1 532.0l11.5 -12.9M854.5 532.0l11.5 -12.9M868.0 532.0l11.5 -12.9M881.4 532.0l11.5 -12.9M894.9 532.0l11.5 -12.9M908.3 532.0l11.5 -12.9M921.7 532.0l11.5 -12.9M935.2 532.0l11.5 -12.9M948.6 532.0l11.5 -12.9M962.1 532.0l11.5 -12.9" stroke="rgba(0,0,0,0.6)" stroke-width="0.9" fill="none"/>
<polygon points="61.2,459.6 74.6,459.6 88.1,459.6 101.5,459.6 115.0,459.6 128.4,459.6 141.9,459.6 155.3,459.6 168.8,459.6 182.2,459.6 195.7,459.6 209.1,459.6 222.6,459.6 236.0,459.6 249.4,459.6 262.9,459.6 276.3,459.6 289.8,459.6 303.2,459.6 316.7,459.6 330.1,459.6 343.6,459.6 357.0,459.6 370.5,459.6 383.9,459.6 397.3,459.6 410.8,459.6 424.2,459.6 437.7,459.6 451.1,459.6 464.6,459.6 478.0,459.6 491.5,459.6 504.9,459.6 518.4,459.6 531.8,459.6 545.3,459.6 558.7,459.6 572.1,459.6 585.6,459.6 599.0,459.6 612.5,459.6 625.9,459.6 639.4,459.6 652.8,459.6 666.3,459.6 679.7,459.6 693.2,459.6 706.6,459.6 720.1,459.6 733.5,459.6 746.9,459.6 760.4,459.6 773.8,459.6 787.3,459.6 800.7,459.6 814.2,459.6 827.6,459.6 841.1,459.6 854.5,459.6 868.0,459.6 881.4,459.6 894.9,459.6 908.3,459.6 921.7,459.6 935.2,459.6 948.6,459.6 962.1,459.6 975.5,459.6 987.0,446.7 973.6,446.7 960.1,446.7 946.7,446.7 933.2,446.7 919.8,446.7 906.4,446.7 892.9,446.7 879.5,446.7 866.0,446.7 852.6,446.7 839.1,446.7 825.7,446.7 812.2,446.7 798.8,446.7 785.3,446.7 771.9,446.7 758.4,446.7 745.0,446.7 731.6,446.7 718.1,446.7 704.7,446.7 691.2,446.7 677.8,446.7 664.3,446.7 650.9,446.7 637.4,446.7 624.0,446.7 610.5,446.7 597.1,446.7 583.6,446.7 570.2,446.7 556.8,446.7 543.3,446.7 529.9,446.7 516.4,446.7 503.0,446.7 489.5,446.7 476.1,446.7 462.6,446.7 449.2,446.7 435.7,446.7 422.3,446.7 408.8,446.7 395.4,446.7 382.0,446.7 368.5,446.7 355.1,446.7 341.6,446.7 328.2,446.7 314.7,446.7 301.3,446.7 287.8,446.7 274.4,446.7 260.9,446.7 247.5,446.7 234.1,446.7 220.6,446.7 207.2,446.7 193.7,446.7 180.3,446.7 166.8,446.7 153.4,446.7 139.9,446.7 126.5,446.7 113.0,446.7 99.6,446.7 86.1,446.7 72.7,446.7" fill="rgba(255,180,80,0.56)" stroke="rgba(0,0,0,0.55)" stroke-width="0.8"/>
<path d="M74.6 459.6l11.5 -12.9M88.1 459.6l11.5 -12.9M101.5 459.6l11.5 -12.9M115.0 459.6l11.5 -12.9M128.4 459.6l11.5 -12.9M141.9 459.6l11.5 -12.9M155.3 459.6l11.5 -12.9M168.8 459.6l11.5 -12.9M182.2 459.6l11.5 -12.9M195.7 459.6l11.5 -12.9M209.1 459.6l11.5 -12.9M222.6 459.6l11.5 -12.9M236.0 459.6l11.5 -12.9M249.4 459.6l11.5 -12.9M262.9 459.6l11.5 -12.9M276.3 459.6l11.5 -12.9M289.8 459.6l11.5 -12.9M303.2 459.6l11.5 -12.9M316.7 459.6l11.5 -12.9M330.1 459.6l11.5 -12.9M343.6 459.6l11.5 -12.9M357.0 459.6l11.5 -12.9M370.5 459.6l11.5 -12.9M383.9 459.6l11.5 -12.9M397.3 459.6l11.5 -12.9M410.8 459.6l11.5 -12.9M424.2 459.6l11.5 -12.9M437.7 459.6l11.5 -12.9M451.1 459.6l11.5 -12.9M464.6 459.6l11.5 -12.9M478.0 459.6l11.5 -12.9M491.5 459.6l11.5 -12.9M504.9 459.6l11.5 -12.9M518.4 459.6l11.5 -12.9M531.8 459.6l11.5 -12.9M545.3 459.6l11.5 -12.9M558.7 459.6l11.5 -12.9M572.1 459.6l11.5 -12.9M585.6 459.6l11.5 -12.9M599.0 459.6l11.5 -12.9M612.5 459.6l11.5 -12.9M625.9 459.6l11.5 -12.9M639.4 459.6l11.5 -12.9M652.8 459.6l11.5 -12.9M666.3 459.6l11.5 -12.9M679.7 459.6l11.5 -12.9M693.2 459.6l11.5 -12.9M706.6 459.6l11.5 -12.9M720.1 459.6l11.5 -12.9M733.5 459.6l11.5 -12.9M746.9 459.6l11.5 -12.9M760.4 459.6l11.5 -12.9M773.8 459.6l11.5 -12.9M787.3 459.6l11.5 -12.9M800.7 459.6l11.5 -12.9M814.2 459.6l11.5 -12.9M827.6 459.6l11.5 -12.9M841.1 459.6l11.5 -12.9M854.5 459.6l11.5 -12.9M868.0 459.6l11.5 -12.9M881.4 459.6l11.5 -12.9M894.9 459.6l11.5 -12.9M908.3 459.6l11.5 -12.9M921.7 459.6l11.5 -12.9M935.2 459.6l11.5 -12.9M948.6 459.6l11.5 -12.9M962.1 459.6l11.5 -12.9" stroke="rgba(0,0,0,0.6)" stroke-width="0.9" fill="none"/>
<polygon points="61.2,487.4 74.6,487.4 88.1,487.4 101.5,487.4 115.0,487.4 128.4,478.2 141.9,478.2 155.3,478.2 168.8,473.5 182.2,466.5 195.7,459.6 209.1,459.6 222.6,459.6 236.0,459.6 249.4,459.6 262.9,459.6 276.3,459.6 289.8,459.6 303.2,459.6 316.7,459.6 330.1,459.6 343.6,459.6 357.0,459.6 370.5,459.6 383.9,459.6 397.3,459.6 410.8,459.6 424.2,459.6 437.7,459.6 451.1,459.6 464.6,459.6 478.0,459.6 491.5,459.6 504.9,459.6 518.4,459.6 531.8,459.6 545.3,459.6 558.7,459.6 572.1,459.6 585.6,459.6 599.0,459.6 612.5,459.6 625.9,459.6 639.4,459.6 652.8,459.6 666.3,459.6 679.7,459.6 693.2,459.6 706.6,459.6 720.1,459.6 733.5,459.6 746.9,459.6 760.4,459.6 773.8,459.6 787.3,459.6 800.7,459.6 814.2,459.6 827.6,459.6 841.1,459.6 854.5,459.6 868.0,459.6 881.4,459.6 894.9,459.6 908.3,459.6 921.7,459.6 935.2,459.6 948.6,459.6 962.1,459.6 975.5,459.6 987.0,446.7 973.6,446.7 960.1,446.7 946.7,446.7 933.2,446.7 919.8,446.7 906.4,446.7 892.9,446.7 879.5,446.7 866.0,446.7 852.6,446.7 839.1,446.7 825.7,446.7 812.2,446.7 798.8,446.7 785.3,446.7 771.9,446.7 758.4,446.7 745.0,446.7 731.6,446.7 718.1,446.7 704.7,446.7 691.2,446.7 677.8,446.7 664.3,446.7 650.9,446.7 637.4,446.7 624.0,446.7 610.5,446.7 597.1,446.7 583.6,446.7 570.2,446.7 556.8,446.7 543.3,446.7 529.9,446.7 516.4,446.7 503.0,446.7 489.5,446.7 476.1,446.7 462.6,446.7 449.2,446.7 435.7,446.7 422.3,446.7 408.8,446.7 395.4,446.7 382.0,446.7 368.5,446.7 355.1,446.7 341.6,446.7 328.2,446.7 314.7,446.7 301.3,446.7 287.8,446.7 274.4,446.7 260.9,446.7 247.5,446.7 234.1,446.7 220.6,446.7 207.2,446.7 193.7,453.6 180.3,460.6 166.8,465.3 153.4,465.3 139.9,465.3 126.5,474.5 113.0,474.5 99.6,474.5 86.1,474.5 72.7,474.5" fill="rgba(255,0,0,0.56)" stroke="rgba(0,0,0,0.55)" stroke-width="0.8"/>
<path d="M74.6 487.4l11.5 -12.9M88.1 487.4l11.5 -12.9M101.5 487.4l11.5 -12.9M115.0 487.4l11.5 -12.9M128.4 478.2l11.5 -12.9M141.9 478.2l11.5 -12.9M155.3 478.2l11.5 -12.9M168.8 473.5l11.5 -12.9M182.2 466.5l11.5 -12.9M195.7 459.6l11.5 -12.9M209.1 459.6l11.5 -12.9M222.6 459.6l11.5 -12.9M236.0 459.6l11.5 -12.9M249.4 459.6l11.5 -12.9M262.9 459.6l11.5 -12.9M276.3 459.6l11.5 -12.9M289.8 459.6l11.5 -12.9M303.2 459.6l11.5 -12.9M316.7 459.6l11.5 -12.9M330.1 459.6l11.5 -12.9M343.6 459.6l11.5 -12.9M357.0 459.6l11.5 -12.9M370.5 459.6l11.5 -12.9M383.9 459.6l11.5 -12.9M397.3 459.6l11.5 -12.9M410.8 459.6l11.5 -12.9M424.2 459.6l11.5 -12.9M437.7 459.6l11.5 -12.9M451.1 459.6l11.5 -12.9M464.6 459.6l11.5 -12.9M478.0 459.6l11.5 -12.9M491.5 459.6l11.5 -12.9M504.9 459.6l11.5 -12.9M518.4 459.6l11.5 -12.9M531.8 459.6l11.5 -12.9M545.3 459.6l11.5 -12.9M558.7 459.6l11.5 -12.9M572.1 459.6l11.5 -12.9M585.6 459.6l11.5 -12.9M599.0 459.6l11.5 -12.9M612.5 459.6l11.5 -12.9M625.9 459.6l11.5 -12.9M639.4 459.6l11.5 -12.9M652.8 459.6l11.5 -12.9M666.3 459.6l11.5 -12.9M679.7 459.6l11.5 -12.9M693.2 459.6l11.5 -12.9M706.6 459.6l11.5 -12.9M720.1 459.6l11.5 -12.9M733.5 459.6l11.5 -12.9M746.9 459.6l11.5 -12.9M760.4 459.6l11.5 -12.9M773.8 459.6l11.5 -12.9M787.3 459.6l11.5 -12.9M800.7 459.6l11.5 -12.9M814.2 459.6l11.5 -12.9M827.6 459.6l11.5 -12.9M841.1 459.6l11.5 -12.9M854.5 459.6l11.5 -12.9M868.0 459.6l11.5 -12.9M881.4 459.6l11.5 -12.9M894.9 459.6l11.5 -12.9M908.3 459.6l11.5 -12.9M921.7 459.6l11.5 -12.9M935.2 459.6l11.5 -12.9M948.6 459.6l11.5 -12.9M962.1 459.6l11.5 -12.9" stroke="rgba(0,0,0,0.6)" stroke-width="0.9" fill="none"/>
<polygon points="61.2,535.0 74.6,535.0 88.1,535.0 101.5,535.0 115.0,535.0 128.4,535.0 141.9,535.0 155.3,535.0 168.8,535.0 182.2,535.0 195.7,535.0 209.1,535.0 222.6,535.0 236.0,535.0 249.4,535.0 262.9,535.0 276.3,535.0 289.8,535.0 303.2,535.0 316.7,535.0 330.1,535.0 343.6,535.0 357.0,535.0 370.5,535.0 383.9,535.0 397.3,535.0 410.8,535.0 424.2,535.0 437.7,535.0 451.1,535.0 464.6,535.0 478.0,535.0 491.5,535.0 504.9,535.0 518.4,535.0 531.8,535.0 545.3,535.0 558.7,535.0 572.1,535.0 585.6,535.0 599.0,535.0 612.5,535.0 625.9,535.0 639.4,535.0 652.8,535.0 666.3,535.0 679.7,535.0 693.2,535.0 706.6,535.0 720.1,535.0 733.5,535.0 746.9,535.0 760.4,535.0 773.8,535.0 787.3,535.0 800.7,535.0 814.2,535.0 827.6,535.0 841.1,535.0 854.5,535.0 868.0,535.0 881.4,535.0 894.9,535.0 908.3,535.0 921.7,535.0 935.2,535.0 948.6,535.0 962.1,535.0 975.5,535.0 987.0,522.1 973.6,522.1 960.1,522.1 946.7,522.1 933.2,522.1 919.8,522.1 906.4,522.1 892.9,522.1 879.5,522.1 866.0,522.1 852.6,522.1 839.1,522.1 825.7,522.1 812.2,522.1 798.8,522.1 785.3,522.1 771.9,522.1 758.4,522.1 745.0,522.1 731.6,522.1 718.1,522.1 704.7,522.1 691.2,522.1 677.8,522.1 664.3,522.1 650.9,522.1 637.4,522.1 624.0,522.1 610.5,522.1 597.1,522.1 583.6,522.1 570.2,522.1 556.8,522.1 543.3,522.1 529.9,522.1 516.4,522.1 503.0,522.1 489.5,522.1 476.1,522.1 462.6,522.1 449.2,522.1 435.7,522.1 422.3,522.1 408.8,522.1 395.4,522.1 382.0,522.1 368.5,522.1 355.1,522.1 341.6,522.1 328.2,522.1 314.7,522.1 301.3,522.1 287.8,522.1 274.4,522.1 260.9,522.1 247.5,522.1 234.1,522.1 220.6,522.1 207.2,522.1 193.7,522.1 180.3,522.1 166.8,522.1 153.4,522.1 139.9,522.1 126.5,522.1 113.0,522.1 99.6,522.1 86.1,522.1 72.7,522.1" fill="rgba(0,0,255,0.6)" stroke="rgba(0,0,0,0.55)" stroke-width="0.8"/>
<path d="M74.6 535.0l11.5 -12.9M88.1 535.0l11.5 -12.9M101.5 535.0l11.5 -12.9M115.0 535.0l11.5 -12.9M128.4 535.0l11.5 -12.9M141.9 535.0l11.5 -12.9M155.3 535.0l11.5 -12.9M168.8 535.0l11.5 -12.9M182.2 535.0l11.5 -12.9M195.7 535.0l11.5 -12.9M209.1 535.0l11.5 -12.9M222.6 535.0l11.5 -12.9M236.0 535.0l11.5 -12.9M249.4 535.0l11.5 -12.9M262.9 535.0l11.5 -12.9M276.3 535.0l11.5 -12.9M289.8 535.0l11.5 -12.9M303.2 535.0l11.5 -12.9M316.7 535.0l11.5 -12.9M330.1 535.0l11.5 -12.9M343.6 535.0l11.5 -12.9M357.0 535.0l11.5 -12.9M370.5 535.0l11.5 -12.9M383.9 535.0l11.5 -12.9M397.3 535.0l11.5 -12.9M410.8 535.0l11.5 -12.9M424.2 535.0l11.5 -12.9M437.7 535.0l11.5 -12.9M451.1 535.0l11.5 -12.9M464.6 535.0l11.5 -12.9M478.0 535.0l11.5 -12.9M491.5 535.0l11.5 -12.9M504.9 535.0l11.5 -12.9M518.4 535.0l11.5 -12.9M531.8 535.0l11.5 -12.9M545.3 535.0l11.5 -12.9M558.7 535.0l11.5 -12.9M572.1 535.0l11.5 -12.9M585.6 535.0l11.5 -12.9M599.0 535.0l11.5 -12.9M612.5 535.0l11.5 -12.9M625.9 535.0l11.5 -12.9M639.4 535.0l11.5 -12.9M652.8 535.0l11.5 -12.9M666.3 535.0l11.5 -12.9M679.7 535.0l11.5 -12.9M693.2 535.0l11.5 -12.9M706.6 535.0l11.5 -12.9M720.1 535.0l11.5 -12.9M733.5 535.0l11.5 -12.9M746.9 535.0l11.5 -12.9M760.4 535.0l11.5 -12.9M773.8 535.0l11.5 -12.9M787.3 535.0l11.5 -12.9M800.7 535.0l11.5 -12.9M814.2 535.0l11.5 -12.9M827.6 535.0l11.5 -12.9M841.1 535.0l11.5 -12.9M854.5 535.0l11.5 -12.9M868.0 535.0l11.5 -12.9M881.4 535.0l11.5 -12.9M894.9 535.0l11.5 -12.9M908.3 535.0l11.5 -12.9M921.7 535.0l11.5 -12.9M935.2 535.0l11.5 -12.9M948.6 535.0l11.5 -12.9M962.1 535.0l11.5 -12.9" stroke="rgba(0,0,0,0.6)" stroke-width="0.9" fill="none"/>
</g>
<g clip-path="url(#rreg)">
<path d="M770 442.4 H988.3 L984.6 446.2 H770 Z" fill="#58E6EE"/>
<path d="M608.1 446.2L611.8 442.4M621.6 446.2L625.3 442.4M635.0 446.2L638.7 442.4M648.5 446.2L652.2 442.4M661.9 446.2L665.6 442.4M675.4 446.2L679.1 442.4M688.8 446.2L692.5 442.4M702.3 446.2L706.0 442.4M715.7 446.2L719.4 442.4M729.2 446.2L732.8 442.4M742.6 446.2L746.3 442.4M756.1 446.2L759.7 442.4M769.5 446.2L773.2 442.4M782.9 446.2L786.6 442.4M796.4 446.2L800.1 442.4M809.8 446.2L813.5 442.4M823.3 446.2L827.0 442.4M836.7 446.2L840.4 442.4M850.2 446.2L853.9 442.4M863.6 446.2L867.3 442.4M877.1 446.2L880.8 442.4M890.5 446.2L894.2 442.4M904.0 446.2L907.6 442.4M917.4 446.2L921.1 442.4M930.9 446.2L934.5 442.4M944.3 446.2L948.0 442.4M957.7 446.2L961.4 442.4M971.2 446.2L974.9 442.4M984.6 446.2L988.3 442.4" stroke="#000" stroke-opacity="0.75" stroke-width="0.9" fill="none"/>
<path d="M770 442.4 H988.3 M770 446.2 H984.6 L988.3 442.4" stroke="#000" stroke-opacity="0.6" stroke-width="0.8" fill="none"/>
<path d="M770 446.2 H988.1 L982.0 452.5 H770 Z" fill="#E2603E"/>
<path d="M605.5 452.5L611.6 446.2M619.0 452.5L625.1 446.2M632.4 452.5L638.5 446.2M645.9 452.5L652.0 446.2M659.3 452.5L665.4 446.2M672.8 452.5L678.9 446.2M686.2 452.5L692.3 446.2M699.7 452.5L705.8 446.2M713.1 452.5L719.2 446.2M726.5 452.5L732.7 446.2M740.0 452.5L746.1 446.2M753.4 452.5L759.5 446.2M766.9 452.5L773.0 446.2M780.3 452.5L786.4 446.2M793.8 452.5L799.9 446.2M807.2 452.5L813.3 446.2M820.7 452.5L826.8 446.2M834.1 452.5L840.2 446.2M847.6 452.5L853.7 446.2M861.0 452.5L867.1 446.2M874.5 452.5L880.6 446.2M887.9 452.5L894.0 446.2M901.3 452.5L907.4 446.2M914.8 452.5L920.9 446.2M928.2 452.5L934.3 446.2M941.7 452.5L947.8 446.2M955.1 452.5L961.2 446.2M968.6 452.5L974.7 446.2M982.0 452.5L988.1 446.2" stroke="#000" stroke-opacity="0.75" stroke-width="0.9" fill="none"/>
<path d="M770 446.2 H988.1 M770 452.5 H982.0 L988.1 446.2" stroke="#000" stroke-opacity="0.6" stroke-width="0.8" fill="none"/>
<path d="M770 452.5 H982.0 L975.5 459.2 H770 Z" fill="#EE4A40"/>
<path d="M599.0 459.2L605.5 452.5M612.5 459.2L619.0 452.5M625.9 459.2L632.4 452.5M639.4 459.2L645.9 452.5M652.8 459.2L659.3 452.5M666.3 459.2L672.8 452.5M679.7 459.2L686.2 452.5M693.2 459.2L699.7 452.5M706.6 459.2L713.1 452.5M720.1 459.2L726.5 452.5M733.5 459.2L740.0 452.5M746.9 459.2L753.4 452.5M760.4 459.2L766.9 452.5M773.8 459.2L780.3 452.5M787.3 459.2L793.8 452.5M800.7 459.2L807.2 452.5M814.2 459.2L820.7 452.5M827.6 459.2L834.1 452.5M841.1 459.2L847.6 452.5M854.5 459.2L861.0 452.5M868.0 459.2L874.5 452.5M881.4 459.2L887.9 452.5M894.9 459.2L901.3 452.5M908.3 459.2L914.8 452.5M921.7 459.2L928.2 452.5M935.2 459.2L941.7 452.5M948.6 459.2L955.1 452.5M962.1 459.2L968.6 452.5M975.5 459.2L982.0 452.5" stroke="#000" stroke-opacity="0.75" stroke-width="0.9" fill="none"/>
<path d="M770 452.5 H982.0 M770 459.2 H975.5 L982.0 452.5" stroke="#000" stroke-opacity="0.6" stroke-width="0.8" fill="none"/>
<path d="M770 459.2 H983.3 L975.5 467.3 H770 Z" fill="#F062EE"/>
<path d="M599.0 467.3L606.9 459.2M612.5 467.3L620.3 459.2M625.9 467.3L633.8 459.2M639.4 467.3L647.2 459.2M652.8 467.3L660.7 459.2M666.3 467.3L674.1 459.2M679.7 467.3L687.6 459.2M693.2 467.3L701.0 459.2M706.6 467.3L714.5 459.2M720.1 467.3L727.9 459.2M733.5 467.3L741.3 459.2M746.9 467.3L754.8 459.2M760.4 467.3L768.2 459.2M773.8 467.3L781.7 459.2M787.3 467.3L795.1 459.2M800.7 467.3L808.6 459.2M814.2 467.3L822.0 459.2M827.6 467.3L835.5 459.2M841.1 467.3L848.9 459.2M854.5 467.3L862.4 459.2M868.0 467.3L875.8 459.2M881.4 467.3L889.3 459.2M894.9 467.3L902.7 459.2M908.3 467.3L916.1 459.2M921.7 467.3L929.6 459.2M935.2 467.3L943.0 459.2M948.6 467.3L956.5 459.2M962.1 467.3L969.9 459.2M975.5 467.3L983.4 459.2" stroke="#000" stroke-opacity="0.75" stroke-width="0.9" fill="none"/>
<path d="M770 459.2 H983.3 M770 467.3 H975.5 L983.3 459.2" stroke="#000" stroke-opacity="0.6" stroke-width="0.8" fill="none"/>
<path d="M770 478.1 H988.2 L984.2 482.2 H770 Z" fill="#AE6A6C"/>
<path d="M607.8 482.2L611.7 478.1M621.2 482.2L625.2 478.1M634.7 482.2L638.6 478.1M648.1 482.2L652.1 478.1M661.5 482.2L665.5 478.1M675.0 482.2L679.0 478.1M688.4 482.2L692.4 478.1M701.9 482.2L705.9 478.1M715.3 482.2L719.3 478.1M728.8 482.2L732.7 478.1M742.2 482.2L746.2 478.1M755.7 482.2L759.6 478.1M769.1 482.2L773.1 478.1M782.6 482.2L786.5 478.1M796.0 482.2L800.0 478.1M809.5 482.2L813.4 478.1M822.9 482.2L826.9 478.1M836.3 482.2L840.3 478.1M849.8 482.2L853.8 478.1M863.2 482.2L867.2 478.1M876.7 482.2L880.7 478.1M890.1 482.2L894.1 478.1M903.6 482.2L907.5 478.1M917.0 482.2L921.0 478.1M930.5 482.2L934.4 478.1M943.9 482.2L947.9 478.1M957.4 482.2L961.3 478.1M970.8 482.2L974.8 478.1M984.2 482.2L988.2 478.1" stroke="#000" stroke-opacity="0.75" stroke-width="0.9" fill="none"/>
<path d="M770 478.1 H988.2 M770 482.2 H984.2 L988.2 478.1" stroke="#000" stroke-opacity="0.6" stroke-width="0.8" fill="none"/>
<path d="M770 482.2 H984.2 L975.5 491.2 H770 Z" fill="#8C5438"/>
<path d="M599.0 491.2L607.8 482.2M612.5 491.2L621.2 482.2M625.9 491.2L634.7 482.2M639.4 491.2L648.1 482.2M652.8 491.2L661.5 482.2M666.3 491.2L675.0 482.2M679.7 491.2L688.4 482.2M693.2 491.2L701.9 482.2M706.6 491.2L715.3 482.2M720.1 491.2L728.8 482.2M733.5 491.2L742.2 482.2M746.9 491.2L755.7 482.2M760.4 491.2L769.1 482.2M773.8 491.2L782.6 482.2M787.3 491.2L796.0 482.2M800.7 491.2L809.5 482.2M814.2 491.2L822.9 482.2M827.6 491.2L836.3 482.2M841.1 491.2L849.8 482.2M854.5 491.2L863.2 482.2M868.0 491.2L876.7 482.2M881.4 491.2L890.1 482.2M894.9 491.2L903.6 482.2M908.3 491.2L917.0 482.2M921.7 491.2L930.5 482.2M935.2 491.2L943.9 482.2M948.6 491.2L957.4 482.2M962.1 491.2L970.8 482.2M975.5 491.2L984.2 482.2" stroke="#000" stroke-opacity="0.75" stroke-width="0.9" fill="none"/>
<path d="M770 482.2 H984.2 M770 491.2 H975.5 L984.2 482.2" stroke="#000" stroke-opacity="0.6" stroke-width="0.8" fill="none"/>
<path d="M770 491.2 H987.9 L984.8 494.4 H770 Z" fill="#86BE84"/>
<path d="M608.3 494.4L611.4 491.2M621.8 494.4L624.9 491.2M635.2 494.4L638.3 491.2M648.7 494.4L651.8 491.2M662.1 494.4L665.2 491.2M675.6 494.4L678.7 491.2M689.0 494.4L692.1 491.2M702.5 494.4L705.6 491.2M715.9 494.4L719.0 491.2M729.4 494.4L732.5 491.2M742.8 494.4L745.9 491.2M756.2 494.4L759.3 491.2M769.7 494.4L772.8 491.2M783.1 494.4L786.2 491.2M796.6 494.4L799.7 491.2M810.0 494.4L813.1 491.2M823.5 494.4L826.6 491.2M836.9 494.4L840.0 491.2M850.4 494.4L853.5 491.2M863.8 494.4L866.9 491.2M877.3 494.4L880.4 491.2M890.7 494.4L893.8 491.2M904.2 494.4L907.3 491.2M917.6 494.4L920.7 491.2M931.0 494.4L934.1 491.2M944.5 494.4L947.6 491.2M957.9 494.4L961.0 491.2M971.4 494.4L974.5 491.2M984.8 494.4L987.9 491.2" stroke="#000" stroke-opacity="0.75" stroke-width="0.9" fill="none"/>
<path d="M770 491.2 H987.9 M770 494.4 H984.8 L987.9 491.2" stroke="#000" stroke-opacity="0.6" stroke-width="0.8" fill="none"/>
<path d="M770 494.4 H988.0 L984.5 498.0 H770 Z" fill="#B88E60"/>
<path d="M608.1 498.0L611.5 494.4M621.5 498.0L625.0 494.4M634.9 498.0L638.4 494.4M648.4 498.0L651.9 494.4M661.8 498.0L665.3 494.4M675.3 498.0L678.8 494.4M688.7 498.0L692.2 494.4M702.2 498.0L705.7 494.4M715.6 498.0L719.1 494.4M729.1 498.0L732.6 494.4M742.5 498.0L746.0 494.4M756.0 498.0L759.4 494.4M769.4 498.0L772.9 494.4M782.8 498.0L786.3 494.4M796.3 498.0L799.8 494.4M809.7 498.0L813.2 494.4M823.2 498.0L826.7 494.4M836.6 498.0L840.1 494.4M850.1 498.0L853.6 494.4M863.5 498.0L867.0 494.4M877.0 498.0L880.5 494.4M890.4 498.0L893.9 494.4M903.9 498.0L907.4 494.4M917.3 498.0L920.8 494.4M930.8 498.0L934.2 494.4M944.2 498.0L947.7 494.4M957.6 498.0L961.1 494.4M971.1 498.0L974.6 494.4M984.5 498.0L988.0 494.4" stroke="#000" stroke-opacity="0.75" stroke-width="0.9" fill="none"/>
<path d="M770 494.4 H988.0 M770 498.0 H984.5 L988.0 494.4" stroke="#000" stroke-opacity="0.6" stroke-width="0.8" fill="none"/>
<path d="M770 498.0 H988.2 L984.3 502.0 H770 Z" fill="#E0AE80"/>
<path d="M607.9 502.0L611.7 498.0M621.3 502.0L625.2 498.0M634.7 502.0L638.6 498.0M648.2 502.0L652.1 498.0M661.6 502.0L665.5 498.0M675.1 502.0L679.0 498.0M688.5 502.0L692.4 498.0M702.0 502.0L705.9 498.0M715.4 502.0L719.3 498.0M728.9 502.0L732.7 498.0M742.3 502.0L746.2 498.0M755.8 502.0L759.6 498.0M769.2 502.0L773.1 498.0M782.7 502.0L786.5 498.0M796.1 502.0L800.0 498.0M809.5 502.0L813.4 498.0M823.0 502.0L826.9 498.0M836.4 502.0L840.3 498.0M849.9 502.0L853.8 498.0M863.3 502.0L867.2 498.0M876.8 502.0L880.7 498.0M890.2 502.0L894.1 498.0M903.7 502.0L907.5 498.0M917.1 502.0L921.0 498.0M930.6 502.0L934.4 498.0M944.0 502.0L947.9 498.0M957.5 502.0L961.3 498.0M970.9 502.0L974.8 498.0M984.3 502.0L988.2 498.0" stroke="#000" stroke-opacity="0.75" stroke-width="0.9" fill="none"/>
<path d="M770 498.0 H988.2 M770 502.0 H984.3 L988.2 498.0" stroke="#000" stroke-opacity="0.6" stroke-width="0.8" fill="none"/>
<path d="M770 502.0 H984.3 L975.5 511.1 H770 Z" fill="#D690A0"/>
<path d="M599.0 511.1L607.9 502.0M612.5 511.1L621.3 502.0M625.9 511.1L634.7 502.0M639.4 511.1L648.2 502.0M652.8 511.1L661.6 502.0M666.3 511.1L675.1 502.0M679.7 511.1L688.5 502.0M693.2 511.1L702.0 502.0M706.6 511.1L715.4 502.0M720.1 511.1L728.9 502.0M733.5 511.1L742.3 502.0M746.9 511.1L755.8 502.0M760.4 511.1L769.2 502.0M773.8 511.1L782.7 502.0M787.3 511.1L796.1 502.0M800.7 511.1L809.5 502.0M814.2 511.1L823.0 502.0M827.6 511.1L836.4 502.0M841.1 511.1L849.9 502.0M854.5 511.1L863.3 502.0M868.0 511.1L876.8 502.0M881.4 511.1L890.2 502.0M894.9 511.1L903.7 502.0M908.3 511.1L917.1 502.0M921.7 511.1L930.6 502.0M935.2 511.1L944.0 502.0M948.6 511.1L957.5 502.0M962.1 511.1L970.9 502.0M975.5 511.1L984.3 502.0" stroke="#000" stroke-opacity="0.75" stroke-width="0.9" fill="none"/>
<path d="M770 502.0 H984.3 M770 511.1 H975.5 L984.3 502.0" stroke="#000" stroke-opacity="0.6" stroke-width="0.8" fill="none"/>
<path d="M770 511.1 H979.9 L975.5 515.6 H770 Z" fill="#B062B6"/>
<path d="M599.0 515.6L603.4 511.1M612.5 515.6L616.8 511.1M625.9 515.6L630.3 511.1M639.4 515.6L643.7 511.1M652.8 515.6L657.2 511.1M666.3 515.6L670.6 511.1M679.7 515.6L684.1 511.1M693.2 515.6L697.5 511.1M706.6 515.6L711.0 511.1M720.1 515.6L724.4 511.1M733.5 515.6L737.9 511.1M746.9 515.6L751.3 511.1M760.4 515.6L764.8 511.1M773.8 515.6L778.2 511.1M787.3 515.6L791.6 511.1M800.7 515.6L805.1 511.1M814.2 515.6L818.5 511.1M827.6 515.6L832.0 511.1M841.1 515.6L845.4 511.1M854.5 515.6L858.9 511.1M868.0 515.6L872.3 511.1M881.4 515.6L885.8 511.1M894.9 515.6L899.2 511.1M908.3 515.6L912.7 511.1M921.7 515.6L926.1 511.1M935.2 515.6L939.6 511.1M948.6 515.6L953.0 511.1M962.1 515.6L966.4 511.1M975.5 515.6L979.9 511.1" stroke="#000" stroke-opacity="0.75" stroke-width="0.9" fill="none"/>
<path d="M770 511.1 H979.9 M770 515.6 H975.5 L979.9 511.1" stroke="#000" stroke-opacity="0.6" stroke-width="0.8" fill="none"/>
<path d="M770 515.6 H990.6 L988.0 518.3 H770 Z" fill="#F6F6F6"/>
<path d="M611.5 518.3L614.2 515.6M625.0 518.3L627.6 515.6M638.4 518.3L641.0 515.6M651.9 518.3L654.5 515.6M665.3 518.3L667.9 515.6M678.8 518.3L681.4 515.6M692.2 518.3L694.8 515.6M705.7 518.3L708.3 515.6M719.1 518.3L721.7 515.6M732.6 518.3L735.2 515.6M746.0 518.3L748.6 515.6M759.4 518.3L762.1 515.6M772.9 518.3L775.5 515.6M786.3 518.3L789.0 515.6M799.8 518.3L802.4 515.6M813.2 518.3L815.8 515.6M826.7 518.3L829.3 515.6M840.1 518.3L842.7 515.6M853.6 518.3L856.2 515.6M867.0 518.3L869.6 515.6M880.5 518.3L883.1 515.6M893.9 518.3L896.5 515.6M907.4 518.3L910.0 515.6M920.8 518.3L923.4 515.6M934.2 518.3L936.9 515.6M947.7 518.3L950.3 515.6M961.1 518.3L963.8 515.6M974.6 518.3L977.2 515.6M988.0 518.3L990.6 515.6" stroke="#000" stroke-opacity="0.75" stroke-width="0.9" fill="none"/>
<path d="M770 515.6 H990.6 M770 518.3 H988.0 L990.6 515.6" stroke="#000" stroke-opacity="0.6" stroke-width="0.8" fill="none"/>
<path d="M770 518.3 H988.8 L984.9 522.3 H770 Z" fill="#70A672"/>
<path d="M608.4 522.3L612.3 518.3M621.9 522.3L625.8 518.3M635.3 522.3L639.2 518.3M648.8 522.3L652.7 518.3M662.2 522.3L666.1 518.3M675.7 522.3L679.5 518.3M689.1 522.3L693.0 518.3M702.6 522.3L706.4 518.3M716.0 522.3L719.9 518.3M729.5 522.3L733.3 518.3M742.9 522.3L746.8 518.3M756.3 522.3L760.2 518.3M769.8 522.3L773.7 518.3M783.2 522.3L787.1 518.3M796.7 522.3L800.6 518.3M810.1 522.3L814.0 518.3M823.6 522.3L827.5 518.3M837.0 522.3L840.9 518.3M850.5 522.3L854.3 518.3M863.9 522.3L867.8 518.3M877.4 522.3L881.2 518.3M890.8 522.3L894.7 518.3M904.3 522.3L908.1 518.3M917.7 522.3L921.6 518.3M931.1 522.3L935.0 518.3M944.6 522.3L948.5 518.3M958.0 522.3L961.9 518.3M971.5 522.3L975.4 518.3M984.9 522.3L988.8 518.3" stroke="#000" stroke-opacity="0.75" stroke-width="0.9" fill="none"/>
<path d="M770 518.3 H988.8 M770 522.3 H984.9 L988.8 518.3" stroke="#000" stroke-opacity="0.6" stroke-width="0.8" fill="none"/>
<path d="M770 522.3 H987.8 L979.2 531.2 H770 Z" fill="#2A44C8"/>
<path d="M602.7 531.2L611.3 522.3M616.2 531.2L624.8 522.3M629.6 531.2L638.2 522.3M643.1 531.2L651.7 522.3M656.5 531.2L665.1 522.3M670.0 531.2L678.6 522.3M683.4 531.2L692.0 522.3M696.8 531.2L705.5 522.3M710.3 531.2L718.9 522.3M723.7 531.2L732.4 522.3M737.2 531.2L745.8 522.3M750.6 531.2L759.3 522.3M764.1 531.2L772.7 522.3M777.5 531.2L786.1 522.3M791.0 531.2L799.6 522.3M804.4 531.2L813.0 522.3M817.9 531.2L826.5 522.3M831.3 531.2L839.9 522.3M844.8 531.2L853.4 522.3M858.2 531.2L866.8 522.3M871.6 531.2L880.3 522.3M885.1 531.2L893.7 522.3M898.5 531.2L907.2 522.3M912.0 531.2L920.6 522.3M925.4 531.2L934.1 522.3M938.9 531.2L947.5 522.3M952.3 531.2L960.9 522.3M965.8 531.2L974.4 522.3M979.2 531.2L987.8 522.3" stroke="#000" stroke-opacity="0.75" stroke-width="0.9" fill="none"/>
<path d="M770 522.3 H987.8 M770 531.2 H979.2 L987.8 522.3" stroke="#000" stroke-opacity="0.6" stroke-width="0.8" fill="none"/>
<path d="M770 531.2 H979.2 L975.5 535.0 H770 Z" fill="#2868F0"/>
<path d="M599.0 535.0L602.7 531.2M612.5 535.0L616.2 531.2M625.9 535.0L629.6 531.2M639.4 535.0L643.1 531.2M652.8 535.0L656.5 531.2M666.3 535.0L670.0 531.2M679.7 535.0L683.4 531.2M693.2 535.0L696.8 531.2M706.6 535.0L710.3 531.2M720.1 535.0L723.7 531.2M733.5 535.0L737.2 531.2M746.9 535.0L750.6 531.2M760.4 535.0L764.1 531.2M773.8 535.0L777.5 531.2M787.3 535.0L791.0 531.2M800.7 535.0L804.4 531.2M814.2 535.0L817.9 531.2M827.6 535.0L831.3 531.2M841.1 535.0L844.8 531.2M854.5 535.0L858.2 531.2M868.0 535.0L871.6 531.2M881.4 535.0L885.1 531.2M894.9 535.0L898.5 531.2M908.3 535.0L912.0 531.2M921.7 535.0L925.4 531.2M935.2 535.0L938.9 531.2M948.6 535.0L952.3 531.2M962.1 535.0L965.8 531.2M975.5 535.0L979.2 531.2" stroke="#000" stroke-opacity="0.75" stroke-width="0.9" fill="none"/>
<path d="M770 531.2 H979.2 M770 535.0 H975.5 L979.2 531.2" stroke="#000" stroke-opacity="0.6" stroke-width="0.8" fill="none"/>
</g>
<path d="M403.2 535 V455.6 L416 442.4 H795.2 V522.6 L782.3 535 Z" fill="rgba(205,240,250,0.58)"/>
<path d="M403.2 455.6 H782.3 V535 M416 442.4 V522.6 H795.2 M782.3 455.6 L795.2 442.4 M403.2 535 L416 522.6 M403.2 535V545" stroke="#555" stroke-width="1" stroke-dasharray="1 2" fill="none"/>
<path d="M73 442.4 V522.5 L61.5 535" stroke="#88AEF0" stroke-width="2" fill="none"/>
<path d="M61.5 455.6 L73 442.4 H1002.5 V523 L989.6 535" stroke="#000" stroke-width="1.1" fill="none"/>
<path d="M61.5 455.6 V545 M52.5 535 H989.6" stroke="#000" stroke-width="1.1" fill="none"/>
<path d="M52.5 455.6H61.5M52.5 495.3H61.5M52.5 515.1H61.5M61.3 535V545M153.3 535V545M245.4 535V545M337.4 535V545M429.5 535V545M521.5 535V545M613.5 535V545M705.6 535V545M797.6 535V545M889.7 535V545M981.7 535V545" stroke="#000" stroke-width="1.1" fill="none"/>
<path d="M782.3 535V545" stroke="#000" stroke-width="1" stroke-dasharray="1 1"/>
<text x="51" y="459.4" font-size="10.5" font-style="italic" text-anchor="end">20</text>
<text x="51" y="499.1" font-size="10.5" font-style="italic" text-anchor="end">10</text>
<text x="51" y="518.9" font-size="10.5" font-style="italic" text-anchor="end">5</text>
<text x="51" y="538.8" font-size="10.5" font-style="italic" text-anchor="end">0</text>
<rect x="40" y="472" width="28" height="10" fill="#fff"/>
<text x="68" y="481.2" font-size="10.5" font-style="italic" text-anchor="end">14:52</text>
<text transform="translate(69.8 550.7) rotate(-45)" font-size="10" stroke="#000" stroke-width="0.25" font-style="italic" text-anchor="end">786,85E3</text>
<text transform="translate(162.4 550.7) rotate(-45)" font-size="10" stroke="#000" stroke-width="0.25" font-style="italic" text-anchor="end">788,45E4</text>
<text transform="translate(254.2 550.7) rotate(-45)" font-size="10" stroke="#000" stroke-width="0.25" font-style="italic" text-anchor="end">147,82E5</text>
<text transform="translate(345.9 550.7) rotate(-45)" font-size="10" stroke="#000" stroke-width="0.25" font-style="italic" text-anchor="end">216,8E5</text>
<text transform="translate(411.7 550.7) rotate(-45)" font-size="10" stroke="#000" stroke-width="0.25" font-style="italic" text-anchor="end">264,07E5</text>
<text transform="translate(438.0 550.7) rotate(-45)" font-size="10" stroke="#000" stroke-width="0.25" font-style="italic" text-anchor="end">285,77E5</text>
<text transform="translate(530.0 550.7) rotate(-45)" font-size="10" stroke="#000" stroke-width="0.25" font-style="italic" text-anchor="end">354,75E5</text>
<text transform="translate(621.9 550.7) rotate(-45)" font-size="10" stroke="#000" stroke-width="0.25" font-style="italic" text-anchor="end">423,73E5</text>
<text transform="translate(713.7 550.7) rotate(-45)" font-size="10" stroke="#000" stroke-width="0.25" font-style="italic" text-anchor="end">492,7E5</text>
<text transform="translate(790.8 550.7) rotate(-45)" font-size="10" stroke="#000" stroke-width="0.25" font-style="italic" text-anchor="end">546,77E5</text>
<text transform="translate(805.7 550.7) rotate(-45)" font-size="10" stroke="#000" stroke-width="0.25" font-style="italic" text-anchor="end">561,68E5</text>
<text transform="translate(897.6 550.7) rotate(-45)" font-size="10" stroke="#000" stroke-width="0.25" font-style="italic" text-anchor="end">630,66E5</text>
<text transform="translate(990.2 550.7) rotate(-45)" font-size="10" stroke="#000" stroke-width="0.25" font-style="italic" text-anchor="end">699,63E5</text>
<text transform="translate(58.5 552) rotate(-45)" font-size="10" stroke="#000" stroke-width="0.25" font-style="italic" text-anchor="end">14,000E01</text>
</svg>
<!-- bottom controls -->
<div class="t" style="left:12px;top:621px">Page:</div>
<div class="a" style="left:46px;top:616px;width:18px;height:19px;background:#fff;border:1px solid #7F9DB9"></div>
<div class="t" style="left:51px;top:621px">0</div>
<div class="a" style="left:65px;top:616px;width:15px;height:9px;border:1px solid #fff;border-radius:2px;background:#BACDF6"></div>
<div class="a" style="left:65px;top:626px;width:15px;height:9px;border:1px solid #fff;border-radius:2px;background:#BACDF6"></div>
<svg class="a" style="left:65px;top:616px" width="15" height="19"><path d="M5 6.5H10L7.5 4Z M5 12.5H10L7.5 15Z" fill="#4D6185"/></svg>
<div class="t" style="left:102px;top:621px">Points per page:</div>
<div class="a" style="left:187px;top:616px;width:62px;height:19px;background:#fff;border:1px solid #7F9DB9"></div>
<div class="t" style="left:192px;top:621px">68</div>
<div class="t" style="left:257px;top:621px">Total Points:</div>
<div class="a" style="left:322px;top:616px;width:62px;height:19px;border:1px solid #7F9DB9"></div>
<div class="t" style="left:327px;top:621px">128</div>
<div class="t" style="left:394px;top:621px">Total Pages:</div>
<div class="a" style="left:459px;top:616px;width:62px;height:19px;border:1px solid #7F9DB9"></div>
<div class="t" style="left:465px;top:621px">2</div>

<!-- bottom tabs -->
<div class="a" style="left:3px;top:645px;width:1007px;height:1px;background:#ACA899"></div>
<div class="a" style="left:100px;top:645px;width:25px;height:18px;background:#fff;border-radius:0 0 2px 2px"></div>
<div class="a" style="left:3px;top:646px;width:1px;height:17px;background:#D8D4C4"></div>
<div class="a" style="left:61px;top:646px;width:1px;height:17px;background:#ACA899"></div>
<div class="a" style="left:99px;top:646px;width:1px;height:17px;background:#ACA899"></div>
<div class="a" style="left:125px;top:646px;width:1px;height:17px;background:#ACA899"></div>
<div class="a" style="left:162px;top:646px;width:1px;height:17px;background:#ACA899"></div>
<div class="a" style="left:200px;top:646px;width:1px;height:17px;background:#ACA899"></div>
<div class="a" style="left:270px;top:646px;width:1px;height:17px;background:#ACA899"></div>
<div class="a" style="left:321px;top:646px;width:1px;height:17px;background:#ACA899"></div>
<div class="t" style="left:7px;top:649px">Allocations</div>
<div class="t" style="left:65.5px;top:649px">Errors</div>
<div class="t" style="left:102.5px;top:649px">Bins</div>
<div class="t" style="left:129px;top:649px">Bands</div>
<div class="t" style="left:166px;top:649px">Usage</div>
<div class="t" style="left:204.5px;top:649px">Trace Details</div>
<div class="t" style="left:274.5px;top:649px">Statistics</div>
</body></html>
